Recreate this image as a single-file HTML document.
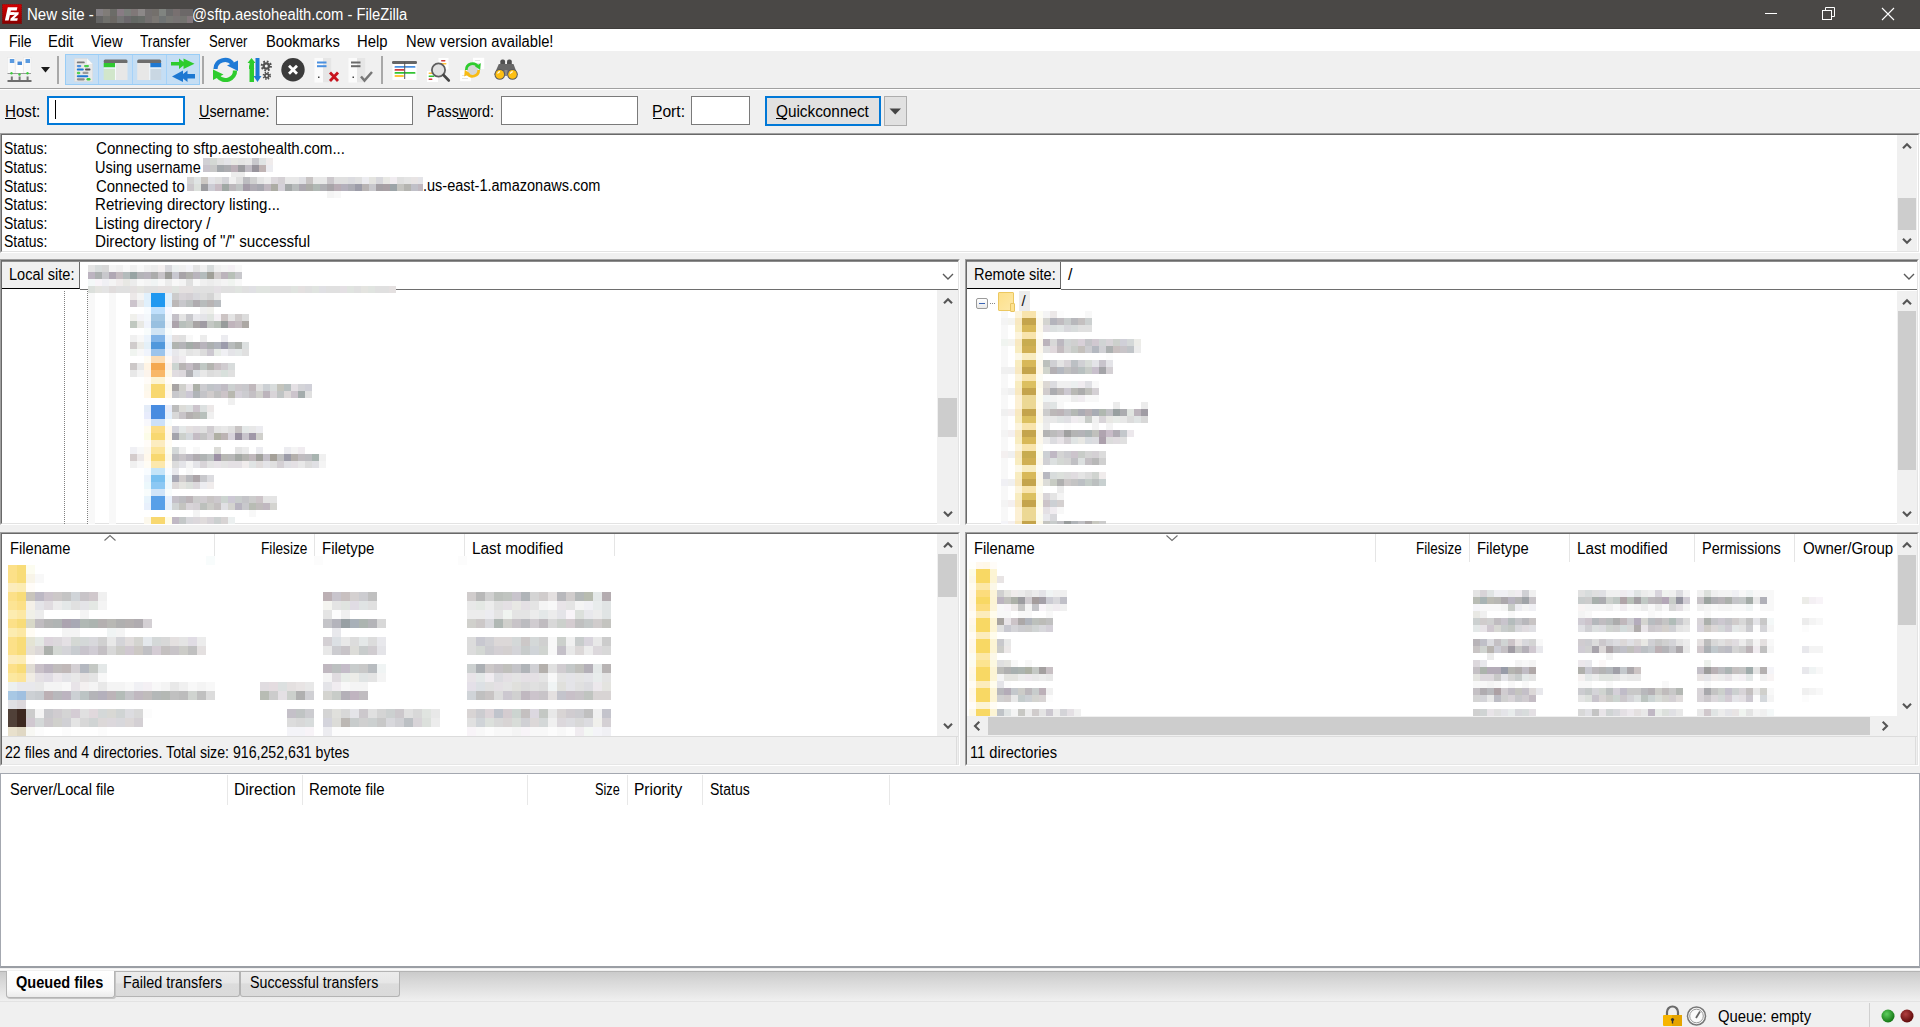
<!DOCTYPE html><html><head><meta charset="utf-8"><style>
*{margin:0;padding:0;box-sizing:border-box}
html,body{width:1920px;height:1027px;overflow:hidden;background:#f0f0f0;position:relative;font-family:"Liberation Sans",sans-serif;color:#000}
div{position:absolute}
.t{white-space:pre}
svg{position:absolute}
</style></head><body>
<div style="left:0px;top:0px;width:1920px;height:29px;background:#4a4846"></div>
<div style="left:0px;top:28px;width:1920px;height:1px;background:#3f3d3b"></div>
<svg style="left:2px;top:4px" width="20" height="20" viewBox="0 0 20 20">
<defs><linearGradient id="fzg" x1="0" y1="0" x2="0" y2="1"><stop offset="0" stop-color="#d40000"/><stop offset="1" stop-color="#8a0000"/></linearGradient></defs>
<rect x="0.3" y="0.3" width="19.4" height="19.4" fill="url(#fzg)" stroke="#7a0000" stroke-width="0.6" stroke-dasharray="1 1"/>
<path d="M5.8 3.3 H15.4 L14.7 6.4 H8.9 L8.5 8.2 H12.2 L11.6 11 H7.9 L6.6 16.4 H2.9 Z" fill="#fff"/>
<path d="M9 8.2 H16.8 L16.4 10.4 L12.2 14.3 H15.8 L15.2 16.8 H8.2 L8.6 14.6 L12.8 10.7 H8.5 Z" fill="#fff"/>
</svg>
<div class="t" style="left:26.66px;top:7.46px;font-size:16px;line-height:16px;transform:scaleX(0.9399);transform-origin:0 0;color:#fff">New site -</div>
<div style="left:96px;top:9px;width:96px;height:14px;background:linear-gradient(90deg,#6a6866,#77726f 20%,#5f5d5b 40%,#7a7775 60%,#656361 80%,#72706e)"></div>
<div class="t" style="left:191.88px;top:7.46px;font-size:16px;line-height:16px;transform:scaleX(0.9233);transform-origin:0 0;color:#fff">@sftp.aestohealth.com - FileZilla</div>
<div style="left:1765px;top:13px;width:12px;height:1px;background:#fff"></div>
<svg style="left:1822px;top:7px" width="14" height="14" viewBox="0 0 14 14"><rect x="0.5" y="3.5" width="9" height="9" fill="none" stroke="#fff"/><path d="M3.5 3.5 V0.5 H12.5 V9.5 H9.5" fill="none" stroke="#fff"/></svg>
<svg style="left:1881px;top:7px" width="14" height="14" viewBox="0 0 14 14"><path d="M1 1 L13 13 M13 1 L1 13" stroke="#fff" stroke-width="1.1"/></svg>
<div style="left:0px;top:29px;width:1920px;height:22px;background:#fff"></div>
<div class="t" style="left:8.52px;top:34.46px;font-size:16px;line-height:16px;transform:scaleX(0.8781);transform-origin:0 0;">File</div>
<div class="t" style="left:48.08px;top:34.46px;font-size:16px;line-height:16px;transform:scaleX(0.9217);transform-origin:0 0;">Edit</div>
<div class="t" style="left:91.10px;top:34.46px;font-size:16px;line-height:16px;transform:scaleX(0.9157);transform-origin:0 0;">View</div>
<div class="t" style="left:140.10px;top:34.46px;font-size:16px;line-height:16px;transform:scaleX(0.8550);transform-origin:0 0;">Transfer</div>
<div class="t" style="left:209.40px;top:34.46px;font-size:16px;line-height:16px;transform:scaleX(0.8160);transform-origin:0 0;">Server</div>
<div class="t" style="left:265.78px;top:34.46px;font-size:16px;line-height:16px;transform:scaleX(0.9225);transform-origin:0 0;">Bookmarks</div>
<div class="t" style="left:357.37px;top:34.46px;font-size:16px;line-height:16px;transform:scaleX(0.9279);transform-origin:0 0;">Help</div>
<div class="t" style="left:405.98px;top:34.46px;font-size:16px;line-height:16px;transform:scaleX(0.9211);transform-origin:0 0;">New version available!</div>
<div style="left:0px;top:51px;width:1920px;height:37px;background:#f0f0f0"></div>
<div style="left:0px;top:88px;width:1920px;height:1px;background:#a0a0a0"></div>
<div style="left:0px;top:89px;width:1920px;height:1px;background:#fff"></div>
<svg style="left:6px;top:56px" width="28" height="28" viewBox="0 0 28 28">
<rect x="1.5" y="1.5" width="7.5" height="16" fill="#fafafa" stroke="#e8e8e8" stroke-width="0.5"/>
<rect x="17.5" y="1.5" width="7.5" height="16" fill="#fafafa" stroke="#e8e8e8" stroke-width="0.5"/>
<rect x="9.8" y="4.2" width="7.4" height="14.5" fill="#fdfdfd" stroke="#e8e8e8" stroke-width="0.5"/>
<rect x="3.8" y="3" width="4.5" height="4" fill="#5b9be0"/>
<rect x="19.5" y="3" width="4.5" height="4" fill="#5b9be0"/>
<rect x="11.5" y="5.5" width="4.5" height="3.5" fill="#4a8cd8"/>
<rect x="1.5" y="17" width="23.5" height="1" fill="#9a9a9a"/>
<circle cx="5.5" cy="17.2" r="1.2" fill="#3ccc3c"/><circle cx="13.5" cy="18.5" r="1.2" fill="#3ccc3c"/><circle cx="21.5" cy="17.2" r="1.2" fill="#3ccc3c"/>
<rect x="4.8" y="20.5" width="2" height="4" fill="#777"/><rect x="12.6" y="20.5" width="2" height="4" fill="#777"/><rect x="20.6" y="20.5" width="2" height="4" fill="#777"/>
<rect x="1.5" y="24" width="24" height="2" fill="#6e6e6e"/>
</svg>
<svg style="left:40px;top:66px" width="11" height="8" viewBox="0 0 11 8"><path d="M1 1 H10 L5.5 6.5 Z" fill="#1a1a1a"/></svg>
<div style="left:57px;top:56px;width:2px;height:28px;background:#a8a8a8"></div>
<div style="left:65px;top:54px;width:135px;height:31px;background:#c5def4;border:1px solid #99cdf6"></div>
<div style="left:98px;top:55px;width:1px;height:29px;background:#a6d2f8"></div>
<div style="left:132px;top:55px;width:1px;height:29px;background:#a6d2f8"></div>
<div style="left:166px;top:55px;width:1px;height:29px;background:#a6d2f8"></div>
<svg style="left:73px;top:57px" width="21" height="26" viewBox="0 0 21 26">
<path d="M1.5 1.5 H14 L19.5 7 V24.5 H1.5 Z" fill="#e9e9e9" stroke="#dadada" stroke-width="0.6"/>
<path d="M14 1.5 L19.5 7 H14 Z" fill="#fafafa"/>
<rect x="3.8" y="4.5" width="8" height="1.8" rx="0.9" fill="#7a7a7a"/>
<rect x="3.8" y="8" width="4.5" height="2.2" rx="1.1" fill="#4c8fdc"/><rect x="11" y="8" width="5" height="2.2" rx="1.1" fill="#4ad04a"/>
<rect x="3.8" y="11.6" width="7" height="1.8" rx="0.9" fill="#1f7ad6"/><rect x="12" y="11.6" width="5.5" height="1.8" rx="0.9" fill="#555"/>
<rect x="3.8" y="14.8" width="3.5" height="2.4" rx="1.2" fill="#52d052"/><rect x="9.5" y="14.8" width="6" height="2.2" rx="1.1" fill="#9a9a9a"/>
<rect x="3.8" y="18.2" width="11.5" height="2" rx="1" fill="#1f7ad6"/>
<rect x="3.8" y="21.2" width="8" height="2.2" rx="1.1" fill="#8a8a8a"/><rect x="13.5" y="21" width="4" height="2.4" rx="1.2" fill="#3ccc3c"/>
</svg>
<svg style="left:103px;top:59px" width="25" height="22" viewBox="0 0 25 22">
<rect x="0.7" y="0.5" width="23.8" height="4" rx="1.5" fill="#6d6d6d"/>
<rect x="0.7" y="4" width="11.5" height="4.5" fill="#30c930"/>
<rect x="0.7" y="9.5" width="11.5" height="11.5" fill="#d1e6cb"/>
<rect x="13" y="4" width="11.5" height="17" fill="#e7e7e7"/>
<rect x="12.2" y="4" width="0.8" height="17" fill="#fff"/><rect x="0.7" y="8.5" width="11.5" height="1" fill="#fff"/>
</svg>
<svg style="left:137px;top:59px" width="25" height="22" viewBox="0 0 25 22">
<rect x="0.2" y="0.5" width="24" height="4" rx="1.5" fill="#6d6d6d"/>
<rect x="0.2" y="4" width="12.2" height="17" fill="#e7e7e7"/>
<rect x="13.2" y="4" width="11" height="4.5" fill="#1f78d1"/>
<rect x="13.2" y="9.5" width="11" height="11.5" fill="#c9d7e3"/>
<rect x="12.4" y="4" width="0.8" height="17" fill="#fff"/><rect x="13.2" y="8.5" width="11" height="1" fill="#fff"/>
</svg>
<svg style="left:170px;top:57px" width="27" height="26" viewBox="0 0 27 26">
<path d="M1 5 H9 V1.5 L13.5 5 V1.5 L24.5 6.8 L13.5 12 V8.5 L9 12 V8.5 H1 Z" fill="#2ecc2e"/>
<path d="M25 17 H17.5 V13.5 L13 17 V13.5 L2 19.5 L13 25 V21.5 L17.5 25 V21.5 H25 Z" fill="#1d78d2"/>
</svg>
<div style="left:202px;top:56px;width:2px;height:28px;background:#a8a8a8"></div>
<svg style="left:212px;top:57px" width="27" height="26" viewBox="0 0 27 26">
<path d="M3.5 12 A9.5 9 0 0 1 20.5 6.5" fill="none" stroke="#1e7ad6" stroke-width="4.2"/>
<path d="M15 8.5 L26 3.5 L26 14 Z" fill="#1e7ad6"/>
<path d="M23 13.5 A9.5 9 0 0 1 6 19.5" fill="none" stroke="#2ecc2e" stroke-width="4.2"/>
<path d="M11.5 17.5 L1 23 L1 12.5 Z" fill="#2ecc2e"/>
</svg>
<svg style="left:246px;top:57px" width="27" height="26" viewBox="0 0 27 26">
<path d="M5.5 1 L9.5 6 H8 V25 H3.5 V6 H1.5 Z" fill="#2ecc2e"/>
<path d="M3 8 L8.5 12 L3 12 Z" fill="#2ecc2e"/>
<rect x="9.5" y="1" width="4" height="19" fill="#1e7ad6"/>
<path d="M7.5 19 H15.5 L11.5 25 Z" fill="#1e7ad6"/>
<circle cx="20.3" cy="9" r="4.6" fill="none" stroke="#505050" stroke-width="2" stroke-dasharray="1.8 1.8"/>
<circle cx="20.3" cy="9" r="3.8" fill="#505050"/><circle cx="20.3" cy="9" r="1.5" fill="#f0f0f0"/>
<circle cx="20.8" cy="18.8" r="3.4" fill="none" stroke="#505050" stroke-width="1.6" stroke-dasharray="1.4 1.3"/>
<circle cx="20.8" cy="18.8" r="2.8" fill="#505050"/><circle cx="20.8" cy="18.8" r="1.1" fill="#f0f0f0"/>
</svg>
<svg style="left:280px;top:57px" width="27" height="26" viewBox="0 0 27 26">
<circle cx="13" cy="12.8" r="11.7" fill="#3b3b3b"/>
<path d="M9 8.8 L17 16.8 M17 8.8 L9 16.8" stroke="#fff" stroke-width="2.8"/>
</svg>
<svg style="left:313px;top:57px" width="28" height="26" viewBox="0 0 28 26">
<rect x="1.5" y="1" width="17" height="24.5" fill="#fbfbfb"/>
<rect x="10" y="1" width="8.5" height="24.5" fill="#e6e6e6"/>
<rect x="4" y="4.5" width="9.5" height="2" fill="#4a90e0"/>
<rect x="4" y="8.2" width="9.5" height="2" fill="#4a90e0"/>
<rect x="5" y="19.5" width="1.5" height="1.5" fill="#444"/>
<path d="M17 15.5 L25 24 M25 15.5 L17 24" stroke="#c8141e" stroke-width="2.8"/>
</svg>
<svg style="left:347px;top:57px" width="28" height="26" viewBox="0 0 28 26">
<rect x="1.5" y="1" width="17" height="24.5" fill="#fbfbfb"/>
<rect x="10" y="1" width="8.5" height="24.5" fill="#e6e6e6"/>
<rect x="4" y="4.5" width="9.5" height="2" fill="#6a6a6a"/>
<rect x="4" y="8.2" width="9.5" height="2" fill="#6a6a6a"/>
<rect x="5.5" y="19.5" width="1.5" height="1.5" fill="#444"/>
<path d="M14 19.5 L17.5 23.5 L25 15" fill="none" stroke="#777" stroke-width="2.5"/>
</svg>
<div style="left:381px;top:56px;width:2px;height:28px;background:#a8a8a8"></div>
<svg style="left:391px;top:60px" width="27" height="21" viewBox="0 0 27 21">
<rect x="1.5" y="2" width="24" height="18" fill="#fff"/>
<rect x="1" y="1" width="25" height="3" rx="1.3" fill="#666"/>
<rect x="3.5" y="6" width="21" height="1.8" rx="0.9" fill="#4a90e0"/>
<rect x="3.5" y="9" width="10" height="1.8" rx="0.9" fill="#d23c3c"/>
<rect x="3.5" y="12" width="21" height="1.8" rx="0.9" fill="#33c433"/>
<rect x="3.5" y="15" width="9.5" height="1.9" rx="0.9" fill="#ffc43a"/>
<rect x="13.2" y="2" width="1" height="17" fill="#555"/>
</svg>
<svg style="left:425px;top:57px" width="27" height="26" viewBox="0 0 27 26">
<rect x="13.5" y="1" width="10" height="11.5" fill="#fff"/>
<rect x="16" y="3" width="4.5" height="1.5" rx="0.7" fill="#d23c3c"/>
<rect x="14.5" y="6" width="7" height="1.5" rx="0.7" fill="#ffc43a"/>
<rect x="14.5" y="9" width="5" height="1.5" rx="0.7" fill="#33c433"/>
<rect x="2" y="14" width="11" height="11" fill="#fff"/>
<rect x="3.5" y="15.5" width="4" height="1.5" rx="0.7" fill="#ffc43a"/>
<rect x="3.5" y="18.5" width="6" height="1.5" rx="0.7" fill="#33c433"/>
<rect x="3.5" y="21.5" width="4" height="1.5" rx="0.7" fill="#d23c3c"/>
<circle cx="13.5" cy="13" r="6.6" fill="#e2e2e2" stroke="#5e5e5e" stroke-width="1.8"/>
<path d="M18.5 18 L23.8 23.5" stroke="#444" stroke-width="2.6" stroke-linecap="round"/>
</svg>
<svg style="left:459px;top:57px" width="27" height="26" viewBox="0 0 27 26">
<rect x="14" y="0.8" width="11.2" height="11.3" fill="#fff"/>
<rect x="16" y="3" width="5" height="0.8" fill="#ddd"/><rect x="16" y="6" width="6" height="0.8" fill="#ddd"/>
<rect x="1.1" y="13.2" width="10.9" height="11" fill="#fff"/>
<rect x="3" y="18" width="5" height="0.8" fill="#ddd"/><rect x="3" y="21" width="6" height="0.8" fill="#ddd"/>
<circle cx="13.5" cy="12.9" r="5.5" fill="#d6d6d6"/>
<path d="M7.3 12.9 A6.2 6.2 0 0 1 18.8 9.6" fill="none" stroke="#2ecc2e" stroke-width="2.7"/>
<path d="M16 9.2 L21.8 6.2 L21.2 13 Z" fill="#2ecc2e"/>
<path d="M19.7 12.9 A6.2 6.2 0 0 1 8.2 16.2" fill="none" stroke="#f7bb14" stroke-width="2.7"/>
<path d="M11 16.6 L5.2 19.6 L5.8 12.8 Z" fill="#f7bb14"/>
</svg>
<svg style="left:492px;top:58px" width="28" height="24" viewBox="0 0 28 24">
<rect x="8.3" y="1.6" width="4.8" height="6" rx="2" fill="#505050"/>
<rect x="15" y="1.6" width="4.8" height="6" rx="2" fill="#505050"/>
<path d="M6.8 6 H21.5 L25.5 16.5 H2.2 Z" fill="#676767"/>
<rect x="12.5" y="12" width="3" height="6" fill="#8a8a8a"/>
<circle cx="7.8" cy="16.4" r="5.3" fill="#5a5a5a"/><circle cx="20.5" cy="16.4" r="5.3" fill="#5a5a5a"/>
<circle cx="7.8" cy="16.4" r="4.3" fill="#fdbf12"/><circle cx="20.5" cy="16.4" r="4.3" fill="#fdbf12"/>
<path d="M5.6 15.6 Q6.2 14 8 13.6" fill="none" stroke="#fff" stroke-width="1.1"/><path d="M18.3 15.6 Q18.9 14 20.7 13.6" fill="none" stroke="#fff" stroke-width="1.1"/>
</svg>
<div class="t" style="left:5.15px;top:104.46px;font-size:16px;line-height:16px;transform:scaleX(0.9456);transform-origin:0 0;">Host:</div>
<div style="left:5px;top:118px;width:11px;height:1px;background:#000"></div>
<div style="left:47px;top:96px;width:138px;height:29px;background:#fff;border:2px solid #0078d7"></div>
<div style="left:55px;top:100px;width:1px;height:19px;background:#000"></div>
<div class="t" style="left:198.70px;top:104.46px;font-size:16px;line-height:16px;transform:scaleX(0.8997);transform-origin:0 0;">Username:</div>
<div style="left:199px;top:118px;width:11px;height:1px;background:#000"></div>
<div style="left:276px;top:96px;width:137px;height:29px;background:#fff;border:1px solid #7a7a7a"></div>
<div class="t" style="left:427.00px;top:104.46px;font-size:16px;line-height:16px;transform:scaleX(0.8969);transform-origin:0 0;">Password:</div>
<div style="left:457px;top:118px;width:11px;height:1px;background:#000"></div>
<div style="left:501px;top:96px;width:137px;height:29px;background:#fff;border:1px solid #7a7a7a"></div>
<div class="t" style="left:651.72px;top:104.46px;font-size:16px;line-height:16px;transform:scaleX(0.9763);transform-origin:0 0;">Port:</div>
<div style="left:652.5px;top:118px;width:9px;height:1px;background:#000"></div>
<div style="left:691px;top:96px;width:59px;height:29px;background:#fff;border:1px solid #7a7a7a"></div>
<div style="left:765px;top:96px;width:116px;height:30px;background:#e1e1e1;border:2px solid #0078d7"></div>
<div class="t" style="left:775.80px;top:104.46px;font-size:16px;line-height:16px;transform:scaleX(0.9580);transform-origin:0 0;">Quickconnect</div>
<div style="left:776px;top:118px;width:11px;height:1px;background:#000"></div>
<div style="left:884px;top:96px;width:23px;height:30px;background:#e1e1e1;border:1px solid #adadad"></div>
<svg style="left:889px;top:108px" width="13" height="8" viewBox="0 0 13 8"><path d="M0.5 0.5 H12 L6.25 6.5 Z" fill="#444"/></svg>
<div style="left:0px;top:133px;width:1920px;height:120px;background:#fff;border-top:1px solid #a0a0a0;border-left:1px solid #a0a0a0;border-right:1px solid #fff;border-bottom:1px solid #fff"></div>
<div style="left:1px;top:134px;width:1918px;height:118px;background:#fff;border-top:1px solid #696969;border-left:1px solid #696969;border-right:1px solid #e3e3e3;border-bottom:1px solid #e3e3e3"></div>
<div style="left:1897px;top:135px;width:20px;height:116px;background:#f0f0f0"></div>
<div style="left:1898px;top:198px;width:18px;height:32px;background:#cdcdcd"></div>
<svg style="left:1901.0px;top:142px" width="12" height="8" viewBox="0 0 12 8"><path d="M2 6.3 L6 2.3 L10 6.3" fill="none" stroke="#555" stroke-width="2.1"/></svg>
<svg style="left:1901.0px;top:237px" width="12" height="8" viewBox="0 0 12 8"><path d="M2 1.7 L6 5.7 L10 1.7" fill="none" stroke="#555" stroke-width="2.1"/></svg>
<div class="t" style="left:4.30px;top:141.46px;font-size:16px;line-height:16px;transform:scaleX(0.8706);transform-origin:0 0;">Status:</div>
<div class="t" style="left:95.60px;top:141.46px;font-size:16px;line-height:16px;transform:scaleX(0.9425);transform-origin:0 0;">Connecting to sftp.aestohealth.com...</div>
<div class="t" style="left:4.30px;top:160.46px;font-size:16px;line-height:16px;transform:scaleX(0.8706);transform-origin:0 0;">Status:</div>
<div class="t" style="left:94.69px;top:160.46px;font-size:16px;line-height:16px;transform:scaleX(0.9074);transform-origin:0 0;">Using username</div>
<div class="t" style="left:4.30px;top:179.46px;font-size:16px;line-height:16px;transform:scaleX(0.8706);transform-origin:0 0;">Status:</div>
<div class="t" style="left:95.60px;top:179.46px;font-size:16px;line-height:16px;transform:scaleX(0.9330);transform-origin:0 0;">Connected to</div>
<div class="t" style="left:4.30px;top:197.46px;font-size:16px;line-height:16px;transform:scaleX(0.8706);transform-origin:0 0;">Status:</div>
<div class="t" style="left:94.66px;top:197.46px;font-size:16px;line-height:16px;transform:scaleX(0.9414);transform-origin:0 0;">Retrieving directory listing...</div>
<div class="t" style="left:4.30px;top:216.46px;font-size:16px;line-height:16px;transform:scaleX(0.8706);transform-origin:0 0;">Status:</div>
<div class="t" style="left:94.64px;top:216.46px;font-size:16px;line-height:16px;transform:scaleX(0.9552);transform-origin:0 0;">Listing directory /</div>
<div class="t" style="left:4.30px;top:234.46px;font-size:16px;line-height:16px;transform:scaleX(0.8706);transform-origin:0 0;">Status:</div>
<div class="t" style="left:94.65px;top:234.46px;font-size:16px;line-height:16px;transform:scaleX(0.9498);transform-origin:0 0;">Directory listing of "/" successful</div>
<div style="left:0px;top:259px;width:960px;height:266px;background:#fff;border-top:1px solid #a0a0a0;border-left:1px solid #a0a0a0;border-right:1px solid #fff;border-bottom:1px solid #fff"></div>
<div style="left:1px;top:260px;width:958px;height:264px;background:#fff;border-top:1px solid #696969;border-left:1px solid #696969;border-right:1px solid #e3e3e3;border-bottom:1px solid #e3e3e3"></div>
<div style="left:2px;top:261px;width:78px;height:28px;background:#f0f0f0;border-right:1px solid #696969;border-bottom:1px solid #000"></div>
<div style="left:2px;top:261px;width:956px;height:1px;background:#8c8c8c"></div>
<div style="left:80px;top:289px;width:878px;height:1px;background:#6e6e6e"></div>
<div class="t" style="left:8.79px;top:267.46px;font-size:16px;line-height:16px;transform:scaleX(0.9081);transform-origin:0 0;">Local site:</div>
<svg style="left:942.0px;top:272.7px" width="12" height="7" viewBox="0 0 12 7"><path d="M1 1 L6.0 6 L11 1" fill="none" stroke="#5a5a5a" stroke-width="1.4"/></svg>
<div style="left:937px;top:290px;width:21px;height:234px;background:#f0f0f0"></div>
<div style="left:938px;top:398px;width:19px;height:39px;background:#cdcdcd"></div>
<svg style="left:941.5px;top:297px" width="12" height="8" viewBox="0 0 12 8"><path d="M2 6.3 L6 2.3 L10 6.3" fill="none" stroke="#555" stroke-width="2.1"/></svg>
<svg style="left:941.5px;top:510px" width="12" height="8" viewBox="0 0 12 8"><path d="M2 1.7 L6 5.7 L10 1.7" fill="none" stroke="#555" stroke-width="2.1"/></svg>
<div style="left:0px;top:532px;width:960px;height:234px;background:#fff;border-top:1px solid #a0a0a0;border-left:1px solid #a0a0a0;border-right:1px solid #fff;border-bottom:1px solid #fff"></div>
<div style="left:1px;top:533px;width:958px;height:232px;background:#fff;border-top:1px solid #696969;border-left:1px solid #696969;border-right:1px solid #e3e3e3;border-bottom:1px solid #e3e3e3"></div>
<div style="left:2px;top:736px;width:956px;height:29px;background:#f0f0f0;border-top:1px solid #dcdcdc;border-bottom:1px solid #e6e6e6"></div>
<div style="left:956px;top:737px;width:1px;height:28px;background:#dcdcdc"></div>
<div class="t" style="left:5.30px;top:745.46px;font-size:16px;line-height:16px;transform:scaleX(0.8848);transform-origin:0 0;">22 files and 4 directories. Total size: 916,252,631 bytes</div>
<div style="left:965px;top:259px;width:954px;height:266px;background:#fff;border-top:1px solid #a0a0a0;border-left:1px solid #a0a0a0;border-right:1px solid #fff;border-bottom:1px solid #fff"></div>
<div style="left:966px;top:260px;width:952px;height:264px;background:#fff;border-top:1px solid #696969;border-left:1px solid #696969;border-right:1px solid #e3e3e3;border-bottom:1px solid #e3e3e3"></div>
<div style="left:967px;top:261px;width:94px;height:28px;background:#f0f0f0;border-right:1px solid #696969;border-bottom:1px solid #000"></div>
<div style="left:967px;top:261px;width:950px;height:1px;background:#8c8c8c"></div>
<div style="left:1061px;top:289px;width:856px;height:1px;background:#6e6e6e"></div>
<div class="t" style="left:973.79px;top:267.46px;font-size:16px;line-height:16px;transform:scaleX(0.9100);transform-origin:0 0;">Remote site:</div>
<svg style="left:1902.5px;top:272.7px" width="12" height="7" viewBox="0 0 12 7"><path d="M1 1 L6.0 6 L11 1" fill="none" stroke="#5a5a5a" stroke-width="1.4"/></svg>
<div style="left:1897px;top:291px;width:20px;height:233px;background:#f0f0f0"></div>
<div style="left:1898px;top:311px;width:18px;height:159px;background:#cdcdcd"></div>
<svg style="left:1901.0px;top:298px" width="12" height="8" viewBox="0 0 12 8"><path d="M2 6.3 L6 2.3 L10 6.3" fill="none" stroke="#555" stroke-width="2.1"/></svg>
<svg style="left:1901.0px;top:510px" width="12" height="8" viewBox="0 0 12 8"><path d="M2 1.7 L6 5.7 L10 1.7" fill="none" stroke="#555" stroke-width="2.1"/></svg>
<div style="left:965px;top:532px;width:954px;height:234px;background:#fff;border-top:1px solid #a0a0a0;border-left:1px solid #a0a0a0;border-right:1px solid #fff;border-bottom:1px solid #fff"></div>
<div style="left:966px;top:533px;width:952px;height:232px;background:#fff;border-top:1px solid #696969;border-left:1px solid #696969;border-right:1px solid #e3e3e3;border-bottom:1px solid #e3e3e3"></div>
<div style="left:967px;top:736px;width:950px;height:29px;background:#f0f0f0;border-top:1px solid #dcdcdc;border-bottom:1px solid #e6e6e6"></div>
<div style="left:1915px;top:737px;width:1px;height:28px;background:#dcdcdc"></div>
<div class="t" style="left:969.58px;top:745.46px;font-size:16px;line-height:16px;transform:scaleX(0.9184);transform-origin:0 0;">11 directories</div>
<div class="t" style="left:1068px;top:267.46px;font-size:16px;line-height:16px;">/</div>
<div class="t" style="left:9.58px;top:541.46px;font-size:16px;line-height:16px;transform:scaleX(0.9167);transform-origin:0 0;">Filename</div>
<svg style="left:103px;top:534px" width="14" height="8" viewBox="0 0 14 8"><path d="M1.5 6.5 L7 1.5 L12.5 6.5" fill="none" stroke="#707070" stroke-width="1.1"/></svg>
<div style="left:214px;top:534px;width:1px;height:22px;background:#e5e5e5"></div>
<div style="left:314px;top:534px;width:1px;height:22px;background:#e5e5e5"></div>
<div style="left:464px;top:534px;width:1px;height:22px;background:#e5e5e5"></div>
<div style="left:614px;top:534px;width:1px;height:22px;background:#e5e5e5"></div>
<div class="t" style="left:261.05px;top:541.46px;font-size:16px;line-height:16px;transform:scaleX(0.8550);transform-origin:0 0;">Filesize</div>
<div class="t" style="left:321.57px;top:541.46px;font-size:16px;line-height:16px;transform:scaleX(0.9342);transform-origin:0 0;">Filetype</div>
<div class="t" style="left:471.94px;top:541.46px;font-size:16px;line-height:16px;transform:scaleX(0.9586);transform-origin:0 0;">Last modified</div>
<div style="left:937px;top:534px;width:21px;height:202px;background:#f0f0f0"></div>
<div style="left:938px;top:554px;width:19px;height:43px;background:#cdcdcd"></div>
<svg style="left:941.5px;top:541px" width="12" height="8" viewBox="0 0 12 8"><path d="M2 6.3 L6 2.3 L10 6.3" fill="none" stroke="#555" stroke-width="2.1"/></svg>
<svg style="left:941.5px;top:722px" width="12" height="8" viewBox="0 0 12 8"><path d="M2 1.7 L6 5.7 L10 1.7" fill="none" stroke="#555" stroke-width="2.1"/></svg>
<div style="left:976px;top:298px;width:12px;height:11px;background:linear-gradient(#fff,#e8e8e8);border:1px solid #9a9a9a;border-radius:2px"></div>
<div style="left:979px;top:303px;width:6px;height:1px;background:#3a64b4"></div>
<div style="left:990px;top:303px;width:1px;height:1px;background:#888"></div>
<div style="left:992px;top:303px;width:1px;height:1px;background:#888"></div>
<div style="left:994px;top:303px;width:1px;height:1px;background:#888"></div>
<div style="left:998px;top:292px;width:16px;height:19px;background:linear-gradient(135deg,#fde08a,#fde8a8);border:1px solid #ecc860;border-radius:1px"></div>
<div style="left:1010px;top:303px;width:5px;height:9px;background:#fde290;border:1px solid #e8c460;border-radius:1px"></div>
<div style="left:1019px;top:291px;width:11px;height:20px;background:#ececec"></div>
<div class="t" style="left:1021.5px;top:293.30px;font-size:15px;line-height:15px;color:#101010">/</div>
<div class="t" style="left:974.28px;top:541.46px;font-size:16px;line-height:16px;transform:scaleX(0.9213);transform-origin:0 0;">Filename</div>
<svg style="left:1165px;top:534px" width="14" height="8" viewBox="0 0 14 8"><path d="M1.5 1.5 L7 6.5 L12.5 1.5" fill="none" stroke="#707070" stroke-width="1.1"/></svg>
<div style="left:1375px;top:534px;width:1px;height:28px;background:#e5e5e5"></div>
<div style="left:1469px;top:534px;width:1px;height:28px;background:#e5e5e5"></div>
<div style="left:1569px;top:534px;width:1px;height:28px;background:#e5e5e5"></div>
<div style="left:1694px;top:534px;width:1px;height:28px;background:#e5e5e5"></div>
<div style="left:1794px;top:534px;width:1px;height:28px;background:#e5e5e5"></div>
<div class="t" style="left:1416.26px;top:541.46px;font-size:16px;line-height:16px;transform:scaleX(0.8418);transform-origin:0 0;">Filesize</div>
<div class="t" style="left:1476.78px;top:541.46px;font-size:16px;line-height:16px;transform:scaleX(0.9215);transform-origin:0 0;">Filetype</div>
<div class="t" style="left:1577.25px;top:541.46px;font-size:16px;line-height:16px;transform:scaleX(0.9521);transform-origin:0 0;">Last modified</div>
<div class="t" style="left:1701.90px;top:541.46px;font-size:16px;line-height:16px;transform:scaleX(0.9044);transform-origin:0 0;">Permissions</div>
<div class="t" style="left:1802.80px;top:541.46px;font-size:16px;line-height:16px;transform:scaleX(0.9382);transform-origin:0 0;">Owner/Group</div>
<div style="left:1897px;top:534px;width:20px;height:182px;background:#f0f0f0"></div>
<div style="left:1898px;top:555px;width:18px;height:70px;background:#cdcdcd"></div>
<svg style="left:1901.0px;top:541px" width="12" height="8" viewBox="0 0 12 8"><path d="M2 6.3 L6 2.3 L10 6.3" fill="none" stroke="#555" stroke-width="2.1"/></svg>
<svg style="left:1901.0px;top:702px" width="12" height="8" viewBox="0 0 12 8"><path d="M2 1.7 L6 5.7 L10 1.7" fill="none" stroke="#555" stroke-width="2.1"/></svg>
<div style="left:967px;top:716px;width:930px;height:20px;background:#f0f0f0"></div>
<div style="left:988px;top:717px;width:882px;height:18px;background:#cdcdcd"></div>
<svg style="left:972px;top:720px" width="10" height="12" viewBox="0 0 10 12"><path d="M7.3 1.8 L3 6 L7.3 10.2" fill="none" stroke="#555" stroke-width="2.1"/></svg>
<svg style="left:1880px;top:720px" width="10" height="12" viewBox="0 0 10 12"><path d="M2.7 1.8 L7 6 L2.7 10.2" fill="none" stroke="#555" stroke-width="2.1"/></svg>
<div style="left:1897px;top:716px;width:20px;height:20px;background:#f0f0f0"></div>
<div style="left:0px;top:773px;width:1920px;height:195px;background:#fff;border:1px solid #a4a8b0;border-bottom:2px solid #9a9ea4"></div>
<div class="t" style="left:10.20px;top:782.46px;font-size:16px;line-height:16px;transform:scaleX(0.9127);transform-origin:0 0;">Server/Local file</div>
<div class="t" style="left:234.22px;top:782.46px;font-size:16px;line-height:16px;transform:scaleX(0.9766);transform-origin:0 0;">Direction</div>
<div class="t" style="left:309.27px;top:782.46px;font-size:16px;line-height:16px;transform:scaleX(0.9347);transform-origin:0 0;">Remote file</div>
<div class="t" style="left:634.23px;top:782.46px;font-size:16px;line-height:16px;transform:scaleX(0.9696);transform-origin:0 0;">Priority</div>
<div class="t" style="left:710.20px;top:782.46px;font-size:16px;line-height:16px;transform:scaleX(0.8774);transform-origin:0 0;">Status</div>
<div class="t" style="left:595.20px;top:782.46px;font-size:16px;line-height:16px;transform:scaleX(0.7942);transform-origin:0 0;">Size</div>
<div style="left:227px;top:775px;width:1px;height:30px;background:#e8e8e8"></div>
<div style="left:302px;top:775px;width:1px;height:30px;background:#e8e8e8"></div>
<div style="left:527px;top:775px;width:1px;height:30px;background:#e8e8e8"></div>
<div style="left:627px;top:775px;width:1px;height:30px;background:#e8e8e8"></div>
<div style="left:702px;top:775px;width:1px;height:30px;background:#e8e8e8"></div>
<div style="left:889px;top:775px;width:1px;height:30px;background:#e8e8e8"></div>
<div style="left:0px;top:969px;width:1920px;height:1px;background:#fcfcfc"></div>
<div style="left:0px;top:971px;width:1920px;height:30px;background:linear-gradient(#c9c9c9,#d6d6d6 30%,#ececec 90%,#f0f0f0)"></div>
<div style="left:0px;top:971px;width:1920px;height:1px;background:#b4b4b4"></div>
<div style="left:0px;top:1001px;width:1920px;height:1px;background:#e3e3e3"></div>
<div style="left:114px;top:972px;width:126px;height:25px;background:linear-gradient(#ececec,#e6e6e6 45%,#dcdcdc 50%,#dadada);border:1px solid #b4b4b4;border-top:none;border-radius:0 0 3px 3px"></div>
<div style="left:240px;top:972px;width:160px;height:25px;background:linear-gradient(#ececec,#e6e6e6 45%,#dcdcdc 50%,#dadada);border:1px solid #b4b4b4;border-top:none;border-radius:0 0 3px 3px"></div>
<div style="left:6px;top:971px;width:109px;height:27px;background:linear-gradient(#fff,#fafafa 70%,#ebebeb);border:1px solid #b4b4b4;border-top:none;border-radius:0 0 3px 3px;box-shadow:1px 1px 0 #c4c4c4"></div>
<div class="t" style="left:16.20px;top:975.46px;font-size:16px;line-height:16px;transform:scaleX(0.9082);transform-origin:0 0;font-weight:bold">Queued files</div>
<div class="t" style="left:123.30px;top:975.46px;font-size:16px;line-height:16px;transform:scaleX(0.8996);transform-origin:0 0;">Failed transfers</div>
<div class="t" style="left:250.20px;top:975.46px;font-size:16px;line-height:16px;transform:scaleX(0.8906);transform-origin:0 0;">Successful transfers</div>
<div style="left:0px;top:1002px;width:1920px;height:25px;background:#f0f0f0"></div>
<div style="left:1869px;top:1003px;width:1px;height:24px;background:#d0d0d0"></div>
<svg style="left:1662px;top:1005px" width="21" height="22" viewBox="0 0 21 22">
<path d="M5 10 V7 A5.5 5.5 0 0 1 16 7 V10" fill="none" stroke="#6a6a6a" stroke-width="2.2"/>
<rect x="1" y="10" width="19" height="11" rx="1" fill="#f7b500"/>
<rect x="10" y="10" width="10" height="11" fill="#e5a400"/>
<circle cx="10.5" cy="14.5" r="1.6" fill="#333"/><rect x="9.8" y="14.5" width="1.4" height="4" fill="#333"/>
</svg>
<svg style="left:1686px;top:1005px" width="21" height="22" viewBox="0 0 21 22">
<circle cx="10.5" cy="11" r="9" fill="#fafafa" stroke="#777" stroke-width="1.5"/>
<circle cx="10.5" cy="11" r="6.8" fill="none" stroke="#999" stroke-width="1"/>
<path d="M10 13 L14 6.5" stroke="#666" stroke-width="1.8"/>
</svg>
<div class="t" style="left:1717.70px;top:1009.46px;font-size:16px;line-height:16px;transform:scaleX(0.9264);transform-origin:0 0;">Queue: empty</div>
<svg style="left:1880px;top:1008px" width="36" height="16" viewBox="0 0 36 16">
<defs><radialGradient id="gg" cx="0.4" cy="0.35" r="0.7"><stop offset="0" stop-color="#5fcf5f"/><stop offset="1" stop-color="#0d6e0d"/></radialGradient>
<radialGradient id="rg" cx="0.4" cy="0.35" r="0.7"><stop offset="0" stop-color="#b04040"/><stop offset="1" stop-color="#5a0606"/></radialGradient></defs>
<circle cx="8" cy="8" r="6.5" fill="url(#gg)"/><circle cx="27" cy="8" r="6.5" fill="url(#rg)"/></svg>
<svg style="left:96px;top:9px" width="97" height="14" viewBox="0 0 97 14" shape-rendering="crispEdges"><path fill="#848084" d="M0 0h7v7h-7z"/><path fill="#807c78" d="M7 0h7v7h-7z"/><path fill="#6c6c68" d="M14 0h7v7h-7z"/><path fill="#887c84" d="M21 0h7v7h-7z"/><path fill="#7c807c" d="M28 0h7v7h-7z"/><path fill="#807878" d="M35 0h7v7h-7z"/><path fill="#8c8888" d="M42 0h7v7h-7z"/><path fill="#747070" d="M49 0h7v7h-7zM49 7h7v7h-7z"/><path fill="#74706c" d="M56 0h7v7h-7z"/><path fill="#808480" d="M63 0h7v7h-7z"/><path fill="#6c6c6c" d="M70 0h7v7h-7z"/><path fill="#787070" d="M77 0h7v7h-7z"/><path fill="#6c6868" d="M84 0h14v7h-14z"/><path fill="#646464" d="M0 7h7v7h-7z"/><path fill="#70706c" d="M7 7h7v7h-7z"/><path fill="#6c6864" d="M14 7h7v7h-7z"/><path fill="#747474" d="M21 7h7v7h-7z"/><path fill="#6c686c" d="M28 7h7v7h-7z"/><path fill="#646864" d="M35 7h7v7h-7z"/><path fill="#686c68" d="M42 7h7v7h-7z"/><path fill="#7c7874" d="M56 7h7v7h-7z"/><path fill="#707474" d="M63 7h7v7h-7z"/><path fill="#787874" d="M70 7h7v7h-7z"/><path fill="#787474" d="M77 7h7v7h-7z"/><path fill="#747470" d="M84 7h7v7h-7z"/><path fill="#84787c" d="M91 7h7v7h-7z"/></svg>
<svg style="left:203px;top:158px" width="70" height="21" viewBox="0 0 70 21" shape-rendering="crispEdges"><path fill="#d0d0d4" d="M0 0h7v7h-7z"/><path fill="#d4d8d4" d="M7 0h7v7h-7z"/><path fill="#e0e0e0" d="M14 0h7v7h-7z"/><path fill="#e4e4e8" d="M21 0h7v7h-7z"/><path fill="#e8e8e4" d="M28 0h7v7h-7z"/><path fill="#e4e4e4" d="M35 0h7v7h-7z"/><path fill="#e8e8e8" d="M42 0h7v7h-7z"/><path fill="#c8c8cc" d="M49 0h7v7h-7z"/><path fill="#e0e4e4" d="M56 0h7v7h-7z"/><path fill="#f0ecec" d="M63 0h7v7h-7z"/><path fill="#c8c4cc" d="M0 7h7v7h-7z"/><path fill="#c8c8c8" d="M7 7h7v7h-7z"/><path fill="#a4a8ac" d="M14 7h7v7h-7z"/><path fill="#acacb0" d="M21 7h7v7h-7z"/><path fill="#bcb0b8" d="M28 7h7v7h-7z"/><path fill="#9c9ca0" d="M35 7h7v7h-7z"/><path fill="#c0bcc4" d="M42 7h7v7h-7z"/><path fill="#98949c" d="M49 7h7v7h-7z"/><path fill="#c0b4b4" d="M56 7h7v7h-7z"/><path fill="#ececf0" d="M63 7h7v7h-7z"/><path fill="#ececec" d="M28 14h14v7h-14z"/></svg>
<svg style="left:187px;top:177px" width="236" height="21" viewBox="0 0 236 21" shape-rendering="crispEdges"><path fill="#d4d4d4" d="M0 0h7v7h-7z"/><path fill="#e0e4e4" d="M7 0h7v7h-7z"/><path fill="#ccc8c4" d="M14 0h7v7h-7z"/><path fill="#e4e4e8" d="M21 0h7v7h-7zM231 0h7v7h-7z"/><path fill="#e0e0e0" d="M28 0h7v7h-7zM49 0h7v7h-7zM147 0h14v7h-14zM168 0h7v7h-7zM210 0h7v7h-7z"/><path fill="#d4d4d8" d="M35 0h7v7h-7z"/><path fill="#f0f0f0" d="M42 0h7v7h-7z"/><path fill="#bcbcc0" d="M56 0h7v7h-7z"/><path fill="#d0d0d0" d="M63 0h7v7h-7z"/><path fill="#e4e4e4" d="M70 0h7v7h-7zM217 0h7v7h-7z"/><path fill="#ececec" d="M77 0h7v7h-7z"/><path fill="#dcd8dc" d="M84 0h7v7h-7z"/><path fill="#d4d0d4" d="M91 0h7v7h-7z"/><path fill="#e8e8e8" d="M98 0h14v7h-14zM126 0h14v7h-14z"/><path fill="#e0e0e4" d="M112 0h7v7h-7z"/><path fill="#c8c4c4" d="M119 0h7v7h-7z"/><path fill="#ccc8cc" d="M140 0h7v7h-7zM0 7h7v7h-7z"/><path fill="#dcdce0" d="M161 0h7v7h-7z"/><path fill="#ececf0" d="M175 0h7v7h-7z"/><path fill="#e4e4e0" d="M182 0h7v7h-7z"/><path fill="#d8d8dc" d="M189 0h7v7h-7z"/><path fill="#e8e8e4" d="M196 0h7v7h-7z"/><path fill="#f0ecf0" d="M203 0h7v7h-7z"/><path fill="#e8e4e4" d="M224 0h7v7h-7z"/><path fill="#dce0dc" d="M7 7h7v7h-7z"/><path fill="#9c9ca0" d="M14 7h7v7h-7z"/><path fill="#ccccd4" d="M21 7h7v7h-7z"/><path fill="#c8bcc4" d="M28 7h7v7h-7z"/><path fill="#a0a8a4" d="M35 7h7v7h-7z"/><path fill="#bcb8bc" d="M42 7h7v7h-7z"/><path fill="#c0c4c4" d="M49 7h7v7h-7z"/><path fill="#a49ca8" d="M56 7h7v7h-7z"/><path fill="#b0acb4" d="M63 7h7v7h-7z"/><path fill="#a8a8b0" d="M70 7h7v7h-7z"/><path fill="#c0b8c0" d="M77 7h7v7h-7zM231 7h7v7h-7z"/><path fill="#acaca4" d="M84 7h7v7h-7z"/><path fill="#d4d0d8" d="M91 7h7v7h-7z"/><path fill="#a4a8a8" d="M98 7h7v7h-7z"/><path fill="#b8bcbc" d="M105 7h7v7h-7z"/><path fill="#aca8b0" d="M112 7h7v7h-7z"/><path fill="#acaca8" d="M119 7h7v7h-7z"/><path fill="#b0b8b4" d="M126 7h7v7h-7z"/><path fill="#b0b0b4" d="M133 7h7v7h-7z"/><path fill="#a8a4a8" d="M140 7h7v7h-7z"/><path fill="#b8acb4" d="M147 7h7v7h-7z"/><path fill="#b4b0bc" d="M154 7h7v7h-7z"/><path fill="#acacb4" d="M161 7h7v7h-7z"/><path fill="#9c9ca8" d="M168 7h7v7h-7z"/><path fill="#b8b4b4" d="M175 7h7v7h-7z"/><path fill="#c8c8cc" d="M182 7h7v7h-7z"/><path fill="#a4a0a4" d="M189 7h7v7h-7z"/><path fill="#a8a0a4" d="M196 7h7v7h-7z"/><path fill="#9ca4a8" d="M203 7h7v7h-7z"/><path fill="#c4c4c0" d="M210 7h7v7h-7z"/><path fill="#b4b4b0" d="M217 7h7v7h-7z"/><path fill="#c0c0c8" d="M224 7h7v7h-7z"/><path fill="#f4f4f4" d="M140 14h7v7h-7z"/><path fill="#f8f8f8" d="M147 14h7v7h-7z"/></svg>
<div class="t" style="left:422.89px;top:178.46px;font-size:16px;line-height:16px;transform:scaleX(0.9068);transform-origin:0 0;">.us-east-1.amazonaws.com</div>
<div style="left:64px;top:291px;width:1px;height:1px;background:#808080"></div>
<div style="left:87px;top:291px;width:1px;height:1px;background:#808080"></div>
<div style="left:64px;top:293px;width:1px;height:1px;background:#808080"></div>
<div style="left:87px;top:293px;width:1px;height:1px;background:#808080"></div>
<div style="left:64px;top:295px;width:1px;height:1px;background:#808080"></div>
<div style="left:87px;top:295px;width:1px;height:1px;background:#808080"></div>
<div style="left:64px;top:297px;width:1px;height:1px;background:#808080"></div>
<div style="left:87px;top:297px;width:1px;height:1px;background:#808080"></div>
<div style="left:64px;top:299px;width:1px;height:1px;background:#808080"></div>
<div style="left:87px;top:299px;width:1px;height:1px;background:#808080"></div>
<div style="left:64px;top:301px;width:1px;height:1px;background:#808080"></div>
<div style="left:87px;top:301px;width:1px;height:1px;background:#808080"></div>
<div style="left:64px;top:303px;width:1px;height:1px;background:#808080"></div>
<div style="left:87px;top:303px;width:1px;height:1px;background:#808080"></div>
<div style="left:64px;top:305px;width:1px;height:1px;background:#808080"></div>
<div style="left:87px;top:305px;width:1px;height:1px;background:#808080"></div>
<div style="left:64px;top:307px;width:1px;height:1px;background:#808080"></div>
<div style="left:87px;top:307px;width:1px;height:1px;background:#808080"></div>
<div style="left:64px;top:309px;width:1px;height:1px;background:#808080"></div>
<div style="left:87px;top:309px;width:1px;height:1px;background:#808080"></div>
<div style="left:64px;top:311px;width:1px;height:1px;background:#808080"></div>
<div style="left:87px;top:311px;width:1px;height:1px;background:#808080"></div>
<div style="left:64px;top:313px;width:1px;height:1px;background:#808080"></div>
<div style="left:87px;top:313px;width:1px;height:1px;background:#808080"></div>
<div style="left:64px;top:315px;width:1px;height:1px;background:#808080"></div>
<div style="left:87px;top:315px;width:1px;height:1px;background:#808080"></div>
<div style="left:64px;top:317px;width:1px;height:1px;background:#808080"></div>
<div style="left:87px;top:317px;width:1px;height:1px;background:#808080"></div>
<div style="left:64px;top:319px;width:1px;height:1px;background:#808080"></div>
<div style="left:87px;top:319px;width:1px;height:1px;background:#808080"></div>
<div style="left:64px;top:321px;width:1px;height:1px;background:#808080"></div>
<div style="left:87px;top:321px;width:1px;height:1px;background:#808080"></div>
<div style="left:64px;top:323px;width:1px;height:1px;background:#808080"></div>
<div style="left:87px;top:323px;width:1px;height:1px;background:#808080"></div>
<div style="left:64px;top:325px;width:1px;height:1px;background:#808080"></div>
<div style="left:87px;top:325px;width:1px;height:1px;background:#808080"></div>
<div style="left:64px;top:327px;width:1px;height:1px;background:#808080"></div>
<div style="left:87px;top:327px;width:1px;height:1px;background:#808080"></div>
<div style="left:64px;top:329px;width:1px;height:1px;background:#808080"></div>
<div style="left:87px;top:329px;width:1px;height:1px;background:#808080"></div>
<div style="left:64px;top:331px;width:1px;height:1px;background:#808080"></div>
<div style="left:87px;top:331px;width:1px;height:1px;background:#808080"></div>
<div style="left:64px;top:333px;width:1px;height:1px;background:#808080"></div>
<div style="left:87px;top:333px;width:1px;height:1px;background:#808080"></div>
<div style="left:64px;top:335px;width:1px;height:1px;background:#808080"></div>
<div style="left:87px;top:335px;width:1px;height:1px;background:#808080"></div>
<div style="left:64px;top:337px;width:1px;height:1px;background:#808080"></div>
<div style="left:87px;top:337px;width:1px;height:1px;background:#808080"></div>
<div style="left:64px;top:339px;width:1px;height:1px;background:#808080"></div>
<div style="left:87px;top:339px;width:1px;height:1px;background:#808080"></div>
<div style="left:64px;top:341px;width:1px;height:1px;background:#808080"></div>
<div style="left:87px;top:341px;width:1px;height:1px;background:#808080"></div>
<div style="left:64px;top:343px;width:1px;height:1px;background:#808080"></div>
<div style="left:87px;top:343px;width:1px;height:1px;background:#808080"></div>
<div style="left:64px;top:345px;width:1px;height:1px;background:#808080"></div>
<div style="left:87px;top:345px;width:1px;height:1px;background:#808080"></div>
<div style="left:64px;top:347px;width:1px;height:1px;background:#808080"></div>
<div style="left:87px;top:347px;width:1px;height:1px;background:#808080"></div>
<div style="left:64px;top:349px;width:1px;height:1px;background:#808080"></div>
<div style="left:87px;top:349px;width:1px;height:1px;background:#808080"></div>
<div style="left:64px;top:351px;width:1px;height:1px;background:#808080"></div>
<div style="left:87px;top:351px;width:1px;height:1px;background:#808080"></div>
<div style="left:64px;top:353px;width:1px;height:1px;background:#808080"></div>
<div style="left:87px;top:353px;width:1px;height:1px;background:#808080"></div>
<div style="left:64px;top:355px;width:1px;height:1px;background:#808080"></div>
<div style="left:87px;top:355px;width:1px;height:1px;background:#808080"></div>
<div style="left:64px;top:357px;width:1px;height:1px;background:#808080"></div>
<div style="left:87px;top:357px;width:1px;height:1px;background:#808080"></div>
<div style="left:64px;top:359px;width:1px;height:1px;background:#808080"></div>
<div style="left:87px;top:359px;width:1px;height:1px;background:#808080"></div>
<div style="left:64px;top:361px;width:1px;height:1px;background:#808080"></div>
<div style="left:87px;top:361px;width:1px;height:1px;background:#808080"></div>
<div style="left:64px;top:363px;width:1px;height:1px;background:#808080"></div>
<div style="left:87px;top:363px;width:1px;height:1px;background:#808080"></div>
<div style="left:64px;top:365px;width:1px;height:1px;background:#808080"></div>
<div style="left:87px;top:365px;width:1px;height:1px;background:#808080"></div>
<div style="left:64px;top:367px;width:1px;height:1px;background:#808080"></div>
<div style="left:87px;top:367px;width:1px;height:1px;background:#808080"></div>
<div style="left:64px;top:369px;width:1px;height:1px;background:#808080"></div>
<div style="left:87px;top:369px;width:1px;height:1px;background:#808080"></div>
<div style="left:64px;top:371px;width:1px;height:1px;background:#808080"></div>
<div style="left:87px;top:371px;width:1px;height:1px;background:#808080"></div>
<div style="left:64px;top:373px;width:1px;height:1px;background:#808080"></div>
<div style="left:87px;top:373px;width:1px;height:1px;background:#808080"></div>
<div style="left:64px;top:375px;width:1px;height:1px;background:#808080"></div>
<div style="left:87px;top:375px;width:1px;height:1px;background:#808080"></div>
<div style="left:64px;top:377px;width:1px;height:1px;background:#808080"></div>
<div style="left:87px;top:377px;width:1px;height:1px;background:#808080"></div>
<div style="left:64px;top:379px;width:1px;height:1px;background:#808080"></div>
<div style="left:87px;top:379px;width:1px;height:1px;background:#808080"></div>
<div style="left:64px;top:381px;width:1px;height:1px;background:#808080"></div>
<div style="left:87px;top:381px;width:1px;height:1px;background:#808080"></div>
<div style="left:64px;top:383px;width:1px;height:1px;background:#808080"></div>
<div style="left:87px;top:383px;width:1px;height:1px;background:#808080"></div>
<div style="left:64px;top:385px;width:1px;height:1px;background:#808080"></div>
<div style="left:87px;top:385px;width:1px;height:1px;background:#808080"></div>
<div style="left:64px;top:387px;width:1px;height:1px;background:#808080"></div>
<div style="left:87px;top:387px;width:1px;height:1px;background:#808080"></div>
<div style="left:64px;top:389px;width:1px;height:1px;background:#808080"></div>
<div style="left:87px;top:389px;width:1px;height:1px;background:#808080"></div>
<div style="left:64px;top:391px;width:1px;height:1px;background:#808080"></div>
<div style="left:87px;top:391px;width:1px;height:1px;background:#808080"></div>
<div style="left:64px;top:393px;width:1px;height:1px;background:#808080"></div>
<div style="left:87px;top:393px;width:1px;height:1px;background:#808080"></div>
<div style="left:64px;top:395px;width:1px;height:1px;background:#808080"></div>
<div style="left:87px;top:395px;width:1px;height:1px;background:#808080"></div>
<div style="left:64px;top:397px;width:1px;height:1px;background:#808080"></div>
<div style="left:87px;top:397px;width:1px;height:1px;background:#808080"></div>
<div style="left:64px;top:399px;width:1px;height:1px;background:#808080"></div>
<div style="left:87px;top:399px;width:1px;height:1px;background:#808080"></div>
<div style="left:64px;top:401px;width:1px;height:1px;background:#808080"></div>
<div style="left:87px;top:401px;width:1px;height:1px;background:#808080"></div>
<div style="left:64px;top:403px;width:1px;height:1px;background:#808080"></div>
<div style="left:87px;top:403px;width:1px;height:1px;background:#808080"></div>
<div style="left:64px;top:405px;width:1px;height:1px;background:#808080"></div>
<div style="left:87px;top:405px;width:1px;height:1px;background:#808080"></div>
<div style="left:64px;top:407px;width:1px;height:1px;background:#808080"></div>
<div style="left:87px;top:407px;width:1px;height:1px;background:#808080"></div>
<div style="left:64px;top:409px;width:1px;height:1px;background:#808080"></div>
<div style="left:87px;top:409px;width:1px;height:1px;background:#808080"></div>
<div style="left:64px;top:411px;width:1px;height:1px;background:#808080"></div>
<div style="left:87px;top:411px;width:1px;height:1px;background:#808080"></div>
<div style="left:64px;top:413px;width:1px;height:1px;background:#808080"></div>
<div style="left:87px;top:413px;width:1px;height:1px;background:#808080"></div>
<div style="left:64px;top:415px;width:1px;height:1px;background:#808080"></div>
<div style="left:87px;top:415px;width:1px;height:1px;background:#808080"></div>
<div style="left:64px;top:417px;width:1px;height:1px;background:#808080"></div>
<div style="left:87px;top:417px;width:1px;height:1px;background:#808080"></div>
<div style="left:64px;top:419px;width:1px;height:1px;background:#808080"></div>
<div style="left:87px;top:419px;width:1px;height:1px;background:#808080"></div>
<div style="left:64px;top:421px;width:1px;height:1px;background:#808080"></div>
<div style="left:87px;top:421px;width:1px;height:1px;background:#808080"></div>
<div style="left:64px;top:423px;width:1px;height:1px;background:#808080"></div>
<div style="left:87px;top:423px;width:1px;height:1px;background:#808080"></div>
<div style="left:64px;top:425px;width:1px;height:1px;background:#808080"></div>
<div style="left:87px;top:425px;width:1px;height:1px;background:#808080"></div>
<div style="left:64px;top:427px;width:1px;height:1px;background:#808080"></div>
<div style="left:87px;top:427px;width:1px;height:1px;background:#808080"></div>
<div style="left:64px;top:429px;width:1px;height:1px;background:#808080"></div>
<div style="left:87px;top:429px;width:1px;height:1px;background:#808080"></div>
<div style="left:64px;top:431px;width:1px;height:1px;background:#808080"></div>
<div style="left:87px;top:431px;width:1px;height:1px;background:#808080"></div>
<div style="left:64px;top:433px;width:1px;height:1px;background:#808080"></div>
<div style="left:87px;top:433px;width:1px;height:1px;background:#808080"></div>
<div style="left:64px;top:435px;width:1px;height:1px;background:#808080"></div>
<div style="left:87px;top:435px;width:1px;height:1px;background:#808080"></div>
<div style="left:64px;top:437px;width:1px;height:1px;background:#808080"></div>
<div style="left:87px;top:437px;width:1px;height:1px;background:#808080"></div>
<div style="left:64px;top:439px;width:1px;height:1px;background:#808080"></div>
<div style="left:87px;top:439px;width:1px;height:1px;background:#808080"></div>
<div style="left:64px;top:441px;width:1px;height:1px;background:#808080"></div>
<div style="left:87px;top:441px;width:1px;height:1px;background:#808080"></div>
<div style="left:64px;top:443px;width:1px;height:1px;background:#808080"></div>
<div style="left:87px;top:443px;width:1px;height:1px;background:#808080"></div>
<div style="left:64px;top:445px;width:1px;height:1px;background:#808080"></div>
<div style="left:87px;top:445px;width:1px;height:1px;background:#808080"></div>
<div style="left:64px;top:447px;width:1px;height:1px;background:#808080"></div>
<div style="left:87px;top:447px;width:1px;height:1px;background:#808080"></div>
<div style="left:64px;top:449px;width:1px;height:1px;background:#808080"></div>
<div style="left:87px;top:449px;width:1px;height:1px;background:#808080"></div>
<div style="left:64px;top:451px;width:1px;height:1px;background:#808080"></div>
<div style="left:87px;top:451px;width:1px;height:1px;background:#808080"></div>
<div style="left:64px;top:453px;width:1px;height:1px;background:#808080"></div>
<div style="left:87px;top:453px;width:1px;height:1px;background:#808080"></div>
<div style="left:64px;top:455px;width:1px;height:1px;background:#808080"></div>
<div style="left:87px;top:455px;width:1px;height:1px;background:#808080"></div>
<div style="left:64px;top:457px;width:1px;height:1px;background:#808080"></div>
<div style="left:87px;top:457px;width:1px;height:1px;background:#808080"></div>
<div style="left:64px;top:459px;width:1px;height:1px;background:#808080"></div>
<div style="left:87px;top:459px;width:1px;height:1px;background:#808080"></div>
<div style="left:64px;top:461px;width:1px;height:1px;background:#808080"></div>
<div style="left:87px;top:461px;width:1px;height:1px;background:#808080"></div>
<div style="left:64px;top:463px;width:1px;height:1px;background:#808080"></div>
<div style="left:87px;top:463px;width:1px;height:1px;background:#808080"></div>
<div style="left:64px;top:465px;width:1px;height:1px;background:#808080"></div>
<div style="left:87px;top:465px;width:1px;height:1px;background:#808080"></div>
<div style="left:64px;top:467px;width:1px;height:1px;background:#808080"></div>
<div style="left:87px;top:467px;width:1px;height:1px;background:#808080"></div>
<div style="left:64px;top:469px;width:1px;height:1px;background:#808080"></div>
<div style="left:87px;top:469px;width:1px;height:1px;background:#808080"></div>
<div style="left:64px;top:471px;width:1px;height:1px;background:#808080"></div>
<div style="left:87px;top:471px;width:1px;height:1px;background:#808080"></div>
<div style="left:64px;top:473px;width:1px;height:1px;background:#808080"></div>
<div style="left:87px;top:473px;width:1px;height:1px;background:#808080"></div>
<div style="left:64px;top:475px;width:1px;height:1px;background:#808080"></div>
<div style="left:87px;top:475px;width:1px;height:1px;background:#808080"></div>
<div style="left:64px;top:477px;width:1px;height:1px;background:#808080"></div>
<div style="left:87px;top:477px;width:1px;height:1px;background:#808080"></div>
<div style="left:64px;top:479px;width:1px;height:1px;background:#808080"></div>
<div style="left:87px;top:479px;width:1px;height:1px;background:#808080"></div>
<div style="left:64px;top:481px;width:1px;height:1px;background:#808080"></div>
<div style="left:87px;top:481px;width:1px;height:1px;background:#808080"></div>
<div style="left:64px;top:483px;width:1px;height:1px;background:#808080"></div>
<div style="left:87px;top:483px;width:1px;height:1px;background:#808080"></div>
<div style="left:64px;top:485px;width:1px;height:1px;background:#808080"></div>
<div style="left:87px;top:485px;width:1px;height:1px;background:#808080"></div>
<div style="left:64px;top:487px;width:1px;height:1px;background:#808080"></div>
<div style="left:87px;top:487px;width:1px;height:1px;background:#808080"></div>
<div style="left:64px;top:489px;width:1px;height:1px;background:#808080"></div>
<div style="left:87px;top:489px;width:1px;height:1px;background:#808080"></div>
<div style="left:64px;top:491px;width:1px;height:1px;background:#808080"></div>
<div style="left:87px;top:491px;width:1px;height:1px;background:#808080"></div>
<div style="left:64px;top:493px;width:1px;height:1px;background:#808080"></div>
<div style="left:87px;top:493px;width:1px;height:1px;background:#808080"></div>
<div style="left:64px;top:495px;width:1px;height:1px;background:#808080"></div>
<div style="left:87px;top:495px;width:1px;height:1px;background:#808080"></div>
<div style="left:64px;top:497px;width:1px;height:1px;background:#808080"></div>
<div style="left:87px;top:497px;width:1px;height:1px;background:#808080"></div>
<div style="left:64px;top:499px;width:1px;height:1px;background:#808080"></div>
<div style="left:87px;top:499px;width:1px;height:1px;background:#808080"></div>
<div style="left:64px;top:501px;width:1px;height:1px;background:#808080"></div>
<div style="left:87px;top:501px;width:1px;height:1px;background:#808080"></div>
<div style="left:64px;top:503px;width:1px;height:1px;background:#808080"></div>
<div style="left:87px;top:503px;width:1px;height:1px;background:#808080"></div>
<div style="left:64px;top:505px;width:1px;height:1px;background:#808080"></div>
<div style="left:87px;top:505px;width:1px;height:1px;background:#808080"></div>
<div style="left:64px;top:507px;width:1px;height:1px;background:#808080"></div>
<div style="left:87px;top:507px;width:1px;height:1px;background:#808080"></div>
<div style="left:64px;top:509px;width:1px;height:1px;background:#808080"></div>
<div style="left:87px;top:509px;width:1px;height:1px;background:#808080"></div>
<div style="left:64px;top:511px;width:1px;height:1px;background:#808080"></div>
<div style="left:87px;top:511px;width:1px;height:1px;background:#808080"></div>
<div style="left:64px;top:513px;width:1px;height:1px;background:#808080"></div>
<div style="left:87px;top:513px;width:1px;height:1px;background:#808080"></div>
<div style="left:64px;top:515px;width:1px;height:1px;background:#808080"></div>
<div style="left:87px;top:515px;width:1px;height:1px;background:#808080"></div>
<div style="left:64px;top:517px;width:1px;height:1px;background:#808080"></div>
<div style="left:87px;top:517px;width:1px;height:1px;background:#808080"></div>
<div style="left:64px;top:519px;width:1px;height:1px;background:#808080"></div>
<div style="left:87px;top:519px;width:1px;height:1px;background:#808080"></div>
<div style="left:64px;top:521px;width:1px;height:1px;background:#808080"></div>
<div style="left:87px;top:521px;width:1px;height:1px;background:#808080"></div>
<div style="left:64px;top:523px;width:1px;height:1px;background:#808080"></div>
<div style="left:87px;top:523px;width:1px;height:1px;background:#808080"></div>
<svg style="left:88px;top:265px" width="308" height="259" viewBox="0 0 308 259" shape-rendering="crispEdges"><path fill="#e4e4e4" d="M0 0h7v7h-7zM105 0h7v7h-7zM14 21h7v7h-7zM91 49h7v7h-7zM140 49h7v7h-7zM98 84h7v7h-7zM126 161h7v7h-7zM147 182h7v7h-7zM119 196h7v7h-7zM133 196h7v7h-7zM175 231h14v7h-14z"/><path fill="#d8dcdc" d="M7 0h7v7h-7zM119 0h7v7h-7zM140 98h7v7h-7zM182 119h7v7h-7z"/><path fill="#d8d8d8" d="M14 0h7v7h-7zM84 147h7v7h-7z"/><path fill="#f4f4f4" d="M21 0h7v7h-7zM133 0h7v7h-7zM21 14h7v7h-7zM56 14h7v7h-7zM91 14h7v7h-7zM133 14h7v7h-7zM49 28h7v7h-7zM49 105h7v7h-7zM203 182h7v7h-7zM98 196h7v7h-7zM231 196h7v7h-7zM105 245h7v7h-7z"/><path fill="#f0f0f0" d="M28 0h7v7h-7zM42 0h7v7h-7zM56 0h7v7h-7zM91 0h7v7h-7zM112 0h7v7h-7zM126 0h7v7h-7zM112 14h7v7h-7zM126 14h7v7h-7zM112 42h7v7h-7zM42 70h7v7h-7zM91 84h7v7h-7zM140 133h7v7h-7zM119 147h7v7h-7zM91 182h7v7h-7zM231 189h7v7h-7zM42 196h7v7h-7z"/><path fill="#f8f8f8" d="M35 0h7v7h-7zM49 0h7v7h-7zM147 0h7v7h-7zM49 14h7v7h-7zM70 14h7v7h-7zM84 14h7v7h-7zM105 14h7v7h-7zM147 14h7v7h-7zM0 28h7v7h-7zM21 28h7v7h-7zM0 35h7v7h-7zM21 35h7v7h-7zM0 42h7v7h-7zM21 42h7v7h-7zM0 49h7v7h-7zM21 49h7v7h-7zM0 56h7v7h-7zM21 56h7v7h-7zM0 63h7v7h-7zM21 63h7v7h-7zM0 70h7v7h-7zM21 70h7v7h-7zM49 70h7v7h-7zM98 70h7v7h-7zM0 77h7v7h-7zM21 77h7v7h-7zM0 84h7v7h-7zM21 84h7v7h-7zM49 84h7v7h-7zM0 91h7v7h-7zM21 91h7v7h-7zM0 98h7v7h-7zM21 98h7v7h-7zM0 105h7v7h-7zM21 105h7v7h-7zM0 112h7v7h-7zM21 112h7v7h-7zM0 119h7v7h-7zM21 119h7v7h-7zM0 126h7v7h-7zM21 126h7v7h-7zM0 133h7v7h-7zM21 133h7v7h-7zM0 140h7v7h-7zM21 140h7v7h-7zM0 147h7v7h-7zM21 147h7v7h-7zM0 154h7v7h-7zM21 154h7v7h-7zM0 161h7v7h-7zM21 161h7v7h-7zM0 168h7v7h-7zM21 168h7v7h-7zM0 175h7v7h-7zM21 175h7v7h-7zM0 182h7v7h-7zM21 182h7v7h-7zM49 182h7v7h-7zM105 182h7v7h-7zM0 189h7v7h-7zM21 189h7v7h-7zM0 196h7v7h-7zM21 196h7v7h-7zM49 196h7v7h-7zM0 203h7v7h-7zM21 203h7v7h-7zM98 203h7v7h-7zM0 210h7v7h-7zM21 210h7v7h-7zM0 217h7v7h-7zM21 217h7v7h-7zM0 224h7v7h-7zM21 224h7v7h-7zM0 231h7v7h-7zM21 231h7v7h-7zM0 238h7v7h-7zM21 238h7v7h-7zM0 245h7v7h-7zM21 245h7v7h-7zM161 245h7v7h-7zM0 252h7v7h-7zM21 252h7v7h-7z"/><path fill="#ececec" d="M63 0h7v7h-7zM42 14h7v7h-7zM77 14h7v7h-7zM119 14h7v7h-7zM112 70h7v7h-7zM154 182h7v7h-7z"/><path fill="#f4f0f0" d="M70 0h7v7h-7z"/><path fill="#d8d8dc" d="M77 0h7v7h-7zM105 28h7v7h-7zM98 252h7v7h-7z"/><path fill="#ecf0f0" d="M84 0h7v7h-7zM140 252h7v7h-7z"/><path fill="#f4f4f8" d="M98 0h7v7h-7zM49 49h7v7h-7z"/><path fill="#f4f0f4" d="M140 0h7v7h-7zM126 49h7v7h-7z"/><path fill="#bcb4c0" d="M0 7h7v7h-7z"/><path fill="#acb0b0" d="M7 7h7v7h-7zM119 77h7v7h-7z"/><path fill="#c8c8cc" d="M14 7h7v7h-7zM147 7h7v7h-7zM91 35h7v7h-7zM98 49h7v7h-7zM154 119h7v7h-7zM84 126h7v7h-7zM112 210h7v7h-7zM154 238h7v7h-7z"/><path fill="#b0a8b4" d="M21 7h7v7h-7z"/><path fill="#c4bcc0" d="M28 7h7v7h-7zM147 56h7v7h-7z"/><path fill="#b4bcbc" d="M35 7h7v7h-7zM112 7h7v7h-7z"/><path fill="#98a4a4" d="M42 7h7v7h-7z"/><path fill="#b4b4b8" d="M49 7h7v7h-7zM91 77h7v7h-7z"/><path fill="#b8b4bc" d="M56 7h7v7h-7zM105 7h7v7h-7zM112 77h7v7h-7z"/><path fill="#acacac" d="M63 7h7v7h-7z"/><path fill="#c8c4c8" d="M70 7h7v7h-7zM91 147h7v7h-7zM91 189h7v7h-7z"/><path fill="#9c9c98" d="M77 7h7v7h-7z"/><path fill="#c8c8d0" d="M84 7h7v7h-7z"/><path fill="#a8a4a8" d="M91 7h7v7h-7z"/><path fill="#b0b0ac" d="M98 7h7v7h-7z"/><path fill="#a0a098" d="M119 7h7v7h-7z"/><path fill="#d0cccc" d="M126 7h7v7h-7zM147 49h7v7h-7zM42 77h7v7h-7zM119 126h7v7h-7zM91 210h7v7h-7z"/><path fill="#bcb4bc" d="M133 7h7v7h-7zM175 126h7v7h-7z"/><path fill="#b8c0b8" d="M140 7h7v7h-7zM126 56h7v7h-7z"/><path fill="#f4f8f8" d="M0 14h7v7h-7z"/><path fill="#f8f4f8" d="M7 14h7v7h-7z"/><path fill="#f0f0f4" d="M14 14h7v7h-7zM133 84h7v7h-7zM42 182h7v7h-7z"/><path fill="#f0ecec" d="M28 14h7v7h-7zM154 196h7v7h-7zM119 217h7v7h-7z"/><path fill="#e8e8e4" d="M35 14h7v7h-7zM49 56h7v7h-7z"/><path fill="#f0f4f4" d="M63 14h7v7h-7z"/><path fill="#e0e0e0" d="M98 14h7v7h-7zM28 21h14v7h-14zM56 21h14v7h-14zM105 21h21v7h-21zM133 21h14v7h-14zM154 21h7v7h-7zM182 21h21v7h-21zM217 21h7v7h-7zM238 21h14v7h-14zM266 21h7v7h-7zM287 21h14v7h-14zM91 70h7v7h-7zM154 84h7v7h-7zM126 105h7v7h-7zM140 105h7v7h-7zM168 119h7v7h-7zM217 126h7v7h-7zM112 161h7v7h-7zM140 161h7v7h-7zM182 196h7v7h-7z"/><path fill="#f0f4f0" d="M140 14h7v7h-7zM42 84h7v7h-7z"/><path fill="#dce0dc" d="M0 21h7v7h-7zM98 217h7v7h-7z"/><path fill="#e4e4e0" d="M7 21h7v7h-7zM49 21h7v7h-7zM273 21h7v7h-7zM91 217h7v7h-7z"/><path fill="#e0dcdc" d="M21 21h7v7h-7zM168 196h7v7h-7zM112 252h7v7h-7z"/><path fill="#e4e0e0" d="M42 21h7v7h-7zM70 21h14v7h-14zM91 21h14v7h-14zM210 21h7v7h-7zM301 21h7v7h-7zM84 70h7v7h-7zM98 161h7v7h-7z"/><path fill="#e0e4e0" d="M84 21h7v7h-7zM147 21h7v7h-7zM168 21h14v7h-14zM203 21h7v7h-7zM224 21h7v7h-7zM259 21h7v7h-7zM280 21h7v7h-7zM119 49h7v7h-7z"/><path fill="#e4e0e4" d="M126 21h7v7h-7zM252 21h7v7h-7zM203 119h7v7h-7zM140 196h14v7h-14zM203 196h7v7h-7z"/><path fill="#e0e0e4" d="M161 21h7v7h-7zM231 21h7v7h-7zM196 196h7v7h-7zM224 196h7v7h-7zM133 238h7v7h-7z"/><path fill="#ece8e8" d="M42 28h7v7h-7zM119 140h7v7h-7zM49 189h7v7h-7z"/><path fill="#e0f0fc" d="M56 28h7v7h-7zM77 28h7v7h-7zM56 35h7v7h-7zM77 35h7v7h-7z"/><path fill="#2098f0" d="M63 28h14v7h-14zM63 35h14v7h-14z"/><path fill="#cccccc" d="M84 28h7v7h-7zM105 231h7v7h-7zM161 231h7v7h-7z"/><path fill="#d8d4d8" d="M91 28h7v7h-7zM182 126h7v7h-7zM112 196h7v7h-7zM98 238h7v7h-7zM119 252h7v7h-7z"/><path fill="#d4d0d4" d="M98 28h7v7h-7zM119 168h7v7h-7zM189 196h7v7h-7zM105 238h7v7h-7z"/><path fill="#dcdcdc" d="M112 28h7v7h-7zM154 49h7v7h-7zM112 84h7v7h-7zM119 105h7v7h-7zM84 196h7v7h-7zM217 196h7v7h-7z"/><path fill="#d4d4d4" d="M119 28h7v7h-7z"/><path fill="#e8e8e8" d="M126 28h7v7h-7zM49 35h7v7h-7zM105 84h7v7h-7zM49 98h7v7h-7zM42 105h7v7h-7zM112 105h7v7h-7zM133 161h7v7h-7zM161 161h7v7h-7zM210 196h7v7h-7z"/><path fill="#ccc4cc" d="M42 35h7v7h-7zM203 126h7v7h-7zM105 140h7v7h-7z"/><path fill="#bcb8b8" d="M84 35h7v7h-7z"/><path fill="#bcc0c0" d="M98 35h7v7h-7zM119 189h7v7h-7z"/><path fill="#b0acb0" d="M105 35h7v7h-7zM105 98h7v7h-7zM105 189h7v7h-7z"/><path fill="#b8bcbc" d="M112 35h7v7h-7zM140 77h7v7h-7z"/><path fill="#b8b4b4" d="M119 35h7v7h-7zM91 98h7v7h-7z"/><path fill="#b8bcc0" d="M126 35h7v7h-7z"/><path fill="#f8fcff" d="M56 42h7v7h-7zM56 203h7v7h-7zM77 203h7v7h-7z"/><path fill="#c0e0fc" d="M63 42h14v7h-14z"/><path fill="#f8f8ff" d="M77 42h7v7h-7z"/><path fill="#f0f0ec" d="M119 42h7v7h-7zM42 49h7v7h-7z"/><path fill="#f4f8fc" d="M56 49h7v7h-7zM77 49h7v7h-7z"/><path fill="#a4c8e4" d="M63 49h14v7h-14z"/><path fill="#c4c0c8" d="M84 49h7v7h-7zM175 189h7v7h-7zM84 231h7v7h-7z"/><path fill="#e8e8ec" d="M105 49h7v7h-7zM84 84h7v7h-7zM84 203h7v7h-7z"/><path fill="#e4e4e8" d="M112 49h7v7h-7zM140 84h7v7h-7zM91 196h7v7h-7zM105 196h7v7h-7zM175 196h7v7h-7z"/><path fill="#ccc4c4" d="M133 49h7v7h-7z"/><path fill="#c0c8c0" d="M42 56h7v7h-7z"/><path fill="#f0f4fc" d="M56 56h7v7h-7zM56 84h7v7h-7zM77 84h7v7h-7z"/><path fill="#98c0e0" d="M63 56h14v7h-14z"/><path fill="#f0f4f8" d="M77 56h7v7h-7z"/><path fill="#aca4ac" d="M84 56h7v7h-7z"/><path fill="#b8c0bc" d="M91 56h7v7h-7zM112 147h7v7h-7z"/><path fill="#c0c4c0" d="M98 56h7v7h-7z"/><path fill="#a8a4a4" d="M105 56h7v7h-7zM84 119h7v7h-7z"/><path fill="#a09ca4" d="M112 56h7v7h-7z"/><path fill="#c4c8c4" d="M119 56h7v7h-7z"/><path fill="#989c9c" d="M133 56h7v7h-7z"/><path fill="#c0b4bc" d="M140 56h7v7h-7z"/><path fill="#aca8a4" d="M154 56h7v7h-7z"/><path fill="#f8fcfc" d="M56 63h7v7h-7zM77 63h7v7h-7zM77 154h7v7h-7zM56 224h7v7h-7zM77 224h7v7h-7z"/><path fill="#d0e4f4" d="M63 63h14v7h-14z"/><path fill="#ecf4fc" d="M56 70h7v7h-7zM77 70h7v7h-7zM56 210h7v7h-7z"/><path fill="#80b4e8" d="M63 70h14v7h-14z"/><path fill="#ececf0" d="M133 70h7v7h-7zM168 161h7v7h-7zM168 182h7v7h-7zM196 182h7v7h-7zM112 217h7v7h-7z"/><path fill="#ecece8" d="M49 77h7v7h-7z"/><path fill="#e4f0f8" d="M56 77h7v7h-7z"/><path fill="#5098dc" d="M63 77h14v7h-14z"/><path fill="#e4f0fc" d="M77 77h7v7h-7zM77 147h7v7h-7z"/><path fill="#b0b4b0" d="M84 77h7v7h-7z"/><path fill="#a4aca8" d="M98 77h7v7h-7z"/><path fill="#aca8ac" d="M105 77h7v7h-7z"/><path fill="#b0b4bc" d="M126 77h7v7h-7z"/><path fill="#9c9cac" d="M133 77h7v7h-7z"/><path fill="#acb0ac" d="M147 77h7v7h-7z"/><path fill="#dce0e0" d="M154 77h7v7h-7zM98 140h7v7h-7zM112 140h7v7h-7z"/><path fill="#9cc4ec" d="M63 84h14v7h-14z"/><path fill="#ccc8d0" d="M119 84h7v7h-7z"/><path fill="#e8ece8" d="M126 84h7v7h-7z"/><path fill="#e4e8e8" d="M147 84h7v7h-7zM91 161h7v7h-7zM154 161h7v7h-7z"/><path fill="#fffcf4" d="M56 91h7v7h-7zM77 175h7v7h-7zM56 196h7v7h-7zM77 196h7v7h-7z"/><path fill="#fcdcb4" d="M63 91h14v7h-14z"/><path fill="#fff8f4" d="M77 91h7v7h-7z"/><path fill="#e8e4e8" d="M84 91h7v7h-7zM98 119h7v7h-7zM126 196h7v7h-7z"/><path fill="#f0ecf0" d="M91 91h7v7h-7zM210 182h7v7h-7z"/><path fill="#ccc8c8" d="M42 98h7v7h-7z"/><path fill="#fff4e4" d="M56 98h7v7h-7z"/><path fill="#f4a850" d="M63 98h14v7h-14z"/><path fill="#fcf0e8" d="M77 98h7v7h-7z"/><path fill="#ccd4d0" d="M84 98h7v7h-7zM133 231h7v7h-7z"/><path fill="#c4bcc4" d="M98 98h7v7h-7zM105 168h7v7h-7z"/><path fill="#c0c8c4" d="M112 98h7v7h-7z"/><path fill="#b4b4b0" d="M119 98h7v7h-7zM154 189h7v7h-7z"/><path fill="#c8c0c4" d="M126 98h7v7h-7z"/><path fill="#d0ccd0" d="M133 98h7v7h-7zM119 161h7v7h-7zM112 231h7v7h-7z"/><path fill="#fcf4ec" d="M56 105h7v7h-7z"/><path fill="#f8b868" d="M63 105h14v7h-14z"/><path fill="#fcf8e8" d="M77 105h7v7h-7zM77 119h7v7h-7zM77 189h7v7h-7z"/><path fill="#e0dce0" d="M84 105h7v7h-7zM105 161h7v7h-7z"/><path fill="#dcd8dc" d="M91 105h7v7h-7zM105 217h7v7h-7zM105 252h7v7h-7z"/><path fill="#b0b0b4" d="M98 105h7v7h-7z"/><path fill="#dce0e4" d="M105 105h7v7h-7z"/><path fill="#d8e0dc" d="M133 105h7v7h-7z"/><path fill="#fffcf8" d="M56 112h7v7h-7zM77 112h7v7h-7zM56 175h7v7h-7z"/><path fill="#fcf4d4" d="M63 112h14v7h-14z"/><path fill="#fcf8ec" d="M56 119h7v7h-7zM56 252h7v7h-7z"/><path fill="#f8d870" d="M63 119h14v7h-14zM63 126h14v7h-14zM63 168h14v7h-14zM63 189h14v7h-14zM63 252h14v7h-14z"/><path fill="#d0d0cc" d="M91 119h7v7h-7zM168 126h7v7h-7zM168 168h7v7h-7z"/><path fill="#acb0a8" d="M105 119h7v7h-7z"/><path fill="#ccccd0" d="M112 119h7v7h-7zM154 126h7v7h-7z"/><path fill="#c0c4c8" d="M119 119h7v7h-7z"/><path fill="#c4c4cc" d="M126 119h7v7h-7z"/><path fill="#c0bcc4" d="M133 119h7v7h-7z"/><path fill="#ccd0d0" d="M140 119h7v7h-7zM126 252h7v7h-7z"/><path fill="#ccc8cc" d="M147 119h7v7h-7zM126 231h7v7h-7z"/><path fill="#c0b8bc" d="M161 119h7v7h-7zM161 189h7v7h-7z"/><path fill="#ccd0d4" d="M175 119h7v7h-7z"/><path fill="#c4c4bc" d="M189 119h7v7h-7z"/><path fill="#b8c0c0" d="M196 119h7v7h-7z"/><path fill="#d4d4d8" d="M210 119h7v7h-7z"/><path fill="#d0d0d8" d="M217 119h7v7h-7z"/><path fill="#fff8ec" d="M56 126h7v7h-7zM77 126h7v7h-7zM77 161h7v7h-7zM56 189h7v7h-7z"/><path fill="#d0d0d0" d="M91 126h7v7h-7z"/><path fill="#ccc8d4" d="M98 126h7v7h-7zM140 231h7v7h-7z"/><path fill="#b0b4b8" d="M105 126h7v7h-7z"/><path fill="#c4c4c8" d="M112 126h7v7h-7zM154 231h7v7h-7z"/><path fill="#c0c0c0" d="M126 126h7v7h-7zM189 189h7v7h-7z"/><path fill="#ccc4c8" d="M133 126h7v7h-7zM168 231h7v7h-7z"/><path fill="#b8b8b0" d="M140 126h7v7h-7z"/><path fill="#d4d0d8" d="M147 126h7v7h-7z"/><path fill="#c4c0c4" d="M161 126h7v7h-7z"/><path fill="#c0c4c4" d="M189 126h7v7h-7z"/><path fill="#dcd8d8" d="M196 126h7v7h-7zM84 217h7v7h-7z"/><path fill="#a4acac" d="M210 126h7v7h-7z"/><path fill="#e4ecf8" d="M56 140h7v7h-7z"/><path fill="#488ce0" d="M63 140h14v7h-14zM63 147h14v7h-14z"/><path fill="#e8ecf8" d="M77 140h7v7h-7z"/><path fill="#bcbcbc" d="M84 140h7v7h-7z"/><path fill="#dcdcd8" d="M91 140h7v7h-7zM126 182h7v7h-7z"/><path fill="#e8ecfc" d="M56 147h7v7h-7z"/><path fill="#b4b0b0" d="M98 147h7v7h-7z"/><path fill="#b8b8b4" d="M105 147h7v7h-7zM133 189h7v7h-7z"/><path fill="#f8f8fc" d="M56 154h7v7h-7z"/><path fill="#cce0f8" d="M63 154h14v7h-14z"/><path fill="#fffcf0" d="M56 161h7v7h-7z"/><path fill="#fcdc84" d="M63 161h14v7h-14z"/><path fill="#d4d4dc" d="M84 161h7v7h-7z"/><path fill="#c8c4c4" d="M147 161h7v7h-7zM119 231h7v7h-7z"/><path fill="#fcfce8" d="M56 168h7v7h-7z"/><path fill="#fff8e8" d="M77 168h7v7h-7z"/><path fill="#a4a4ac" d="M84 168h7v7h-7z"/><path fill="#ccd0cc" d="M91 168h7v7h-7z"/><path fill="#d4d8dc" d="M98 168h7v7h-7z"/><path fill="#c4c4c4" d="M112 168h7v7h-7z"/><path fill="#b0b0a4" d="M126 168h7v7h-7z"/><path fill="#bcb4b4" d="M133 168h7v7h-7z"/><path fill="#d8d4dc" d="M140 168h7v7h-7z"/><path fill="#9890a0" d="M147 168h7v7h-7z"/><path fill="#c8c4cc" d="M154 168h7v7h-7z"/><path fill="#a098a8" d="M161 168h7v7h-7z"/><path fill="#fcecc0" d="M63 175h14v7h-14z"/><path fill="#fcf8f0" d="M56 182h7v7h-7z"/><path fill="#fce498" d="M63 182h14v7h-14z"/><path fill="#fcfcf0" d="M77 182h7v7h-7z"/><path fill="#d4d8d8" d="M84 182h7v7h-7z"/><path fill="#d4cccc" d="M42 189h7v7h-7z"/><path fill="#bcbcc0" d="M84 189h7v7h-7zM217 189h7v7h-7zM91 231h7v7h-7z"/><path fill="#bcb8c0" d="M98 189h7v7h-7z"/><path fill="#b0b4b4" d="M112 189h7v7h-7z"/><path fill="#9c90a4" d="M126 189h7v7h-7z"/><path fill="#b8b8b8" d="M140 189h7v7h-7z"/><path fill="#a4a8a4" d="M147 189h7v7h-7z"/><path fill="#a0a09c" d="M168 189h7v7h-7z"/><path fill="#a4a098" d="M182 189h7v7h-7z"/><path fill="#9c9ca8" d="M196 189h7v7h-7z"/><path fill="#b4b0ac" d="M203 189h7v7h-7z"/><path fill="#c0bcc0" d="M210 189h7v7h-7z"/><path fill="#a8b4b0" d="M224 189h7v7h-7z"/><path fill="#fce8ac" d="M63 196h14v7h-14z"/><path fill="#e0e4e4" d="M161 196h7v7h-7z"/><path fill="#c4e4f8" d="M63 203h14v7h-14z"/><path fill="#78c0f0" d="M63 210h14v7h-14z"/><path fill="#ecf8fc" d="M77 210h7v7h-7zM56 217h7v7h-7z"/><path fill="#a8a8b4" d="M84 210h7v7h-7z"/><path fill="#b8b8bc" d="M98 210h7v7h-7z"/><path fill="#aca4a8" d="M105 210h7v7h-7z"/><path fill="#dcdce0" d="M119 210h7v7h-7z"/><path fill="#8cc8f4" d="M63 217h14v7h-14z"/><path fill="#f0f8fc" d="M77 217h7v7h-7z"/><path fill="#d0e4f8" d="M63 224h14v7h-14z"/><path fill="#e8f4fc" d="M56 231h7v7h-7z"/><path fill="#58a0e8" d="M63 231h14v7h-14zM63 238h14v7h-14z"/><path fill="#e8f0fc" d="M77 231h7v7h-7zM56 238h7v7h-7z"/><path fill="#bcb4b8" d="M98 231h7v7h-7z"/><path fill="#c8cccc" d="M147 231h7v7h-7z"/><path fill="#e8f0f8" d="M77 238h7v7h-7z"/><path fill="#d0d4d4" d="M84 238h7v7h-7z"/><path fill="#c4c4c0" d="M91 238h7v7h-7z"/><path fill="#bcc0bc" d="M112 238h7v7h-7z"/><path fill="#ccccc8" d="M119 238h7v7h-7z"/><path fill="#c4c0c0" d="M126 238h7v7h-7z"/><path fill="#d4d4d0" d="M140 238h7v7h-7zM182 238h7v7h-7z"/><path fill="#b8b4c0" d="M147 238h7v7h-7z"/><path fill="#b8bcb4" d="M161 238h7v7h-7z"/><path fill="#c0bcbc" d="M168 238h7v7h-7z"/><path fill="#c0b8c0" d="M175 238h7v7h-7z"/><path fill="#fffce8" d="M77 252h7v7h-7z"/><path fill="#c0b8c4" d="M84 252h7v7h-7z"/><path fill="#c4c8c8" d="M91 252h7v7h-7z"/><path fill="#d8d4d4" d="M133 252h7v7h-7z"/></svg>
<svg style="left:8px;top:556px" width="603" height="180" viewBox="0 0 603 180" shape-rendering="crispEdges"><path fill="#f8fcfc" d="M198 0h9v9h-9z"/><path fill="#fcfcfc" d="M306 0h9v9h-9zM450 0h9v9h-9zM324 54h9v9h-9zM135 153h9v9h-9zM27 171h9v9h-9zM54 171h9v9h-9zM90 171h9v9h-9zM324 171h18v9h-18zM477 171h9v9h-9zM540 171h9v9h-9zM558 171h9v9h-9z"/><path fill="#fce088" d="M0 9h9v9h-9zM0 18h9v9h-9zM0 36h9v9h-9zM9 45h9v9h-9zM0 63h9v9h-9zM0 81h9v9h-9zM0 90h9v9h-9zM0 108h9v9h-9z"/><path fill="#f8dc78" d="M9 9h9v9h-9zM9 18h9v9h-9zM9 36h9v9h-9zM9 63h9v9h-9zM9 81h9v9h-9zM9 90h9v9h-9zM9 108h9v9h-9z"/><path fill="#fcfcf0" d="M18 9h9v9h-9z"/><path fill="#f8f4e8" d="M18 18h9v9h-9z"/><path fill="#f8f8f8" d="M27 18h9v9h-9zM540 45h9v9h-9zM540 81h9v9h-9zM540 90h9v9h-9zM90 117h9v9h-9zM540 117h9v9h-9zM54 126h9v9h-9zM117 126h9v9h-9zM144 126h9v9h-9zM180 126h9v9h-9zM198 126h9v9h-9zM333 126h9v9h-9zM468 171h9v9h-9zM486 171h18v9h-18zM522 171h18v9h-18zM549 171h9v9h-9z"/><path fill="#fcecbc" d="M0 27h9v9h-9zM0 99h9v9h-9z"/><path fill="#fcecb4" d="M9 27h9v9h-9zM9 99h9v9h-9z"/><path fill="#fffcf8" d="M18 27h9v9h-9zM18 99h9v9h-9z"/><path fill="#c8c4bc" d="M18 36h9v9h-9z"/><path fill="#bcb8c4" d="M27 36h9v9h-9z"/><path fill="#ccc4cc" d="M36 36h9v9h-9zM522 135h9v9h-9z"/><path fill="#ccc8c8" d="M45 36h9v9h-9zM468 63h9v9h-9zM513 81h9v9h-9zM477 108h9v9h-9z"/><path fill="#c4c4c4" d="M54 36h9v9h-9z"/><path fill="#d0d4d8" d="M63 36h9v9h-9zM522 90h9v9h-9zM459 135h9v9h-9zM468 162h9v9h-9z"/><path fill="#c8c4c8" d="M72 36h9v9h-9zM504 63h9v9h-9zM162 90h9v9h-9zM333 90h9v9h-9zM531 135h9v9h-9zM567 135h9v9h-9z"/><path fill="#d0c8cc" d="M81 36h9v9h-9z"/><path fill="#f0f0f0" d="M90 36h9v9h-9zM333 54h9v9h-9zM558 81h9v9h-9zM171 126h9v9h-9zM585 153h9v9h-9zM540 162h9v9h-9z"/><path fill="#bcb0b4" d="M315 36h9v9h-9zM36 135h9v9h-9z"/><path fill="#c8c4cc" d="M324 36h9v9h-9zM504 36h9v9h-9zM72 90h9v9h-9z"/><path fill="#c8c0c0" d="M333 36h9v9h-9z"/><path fill="#d4d0d0" d="M342 36h9v9h-9zM495 90h9v9h-9z"/><path fill="#ccccd0" d="M351 36h9v9h-9zM324 90h9v9h-9zM477 90h9v9h-9zM297 153h9v9h-9zM468 153h9v9h-9zM567 153h9v9h-9z"/><path fill="#c0c0c0" d="M360 36h9v9h-9zM567 63h9v9h-9zM180 90h9v9h-9zM162 135h9v9h-9zM189 135h9v9h-9zM468 135h9v9h-9zM576 153h9v9h-9z"/><path fill="#d0cccc" d="M459 36h9v9h-9zM531 36h9v9h-9zM558 36h9v9h-9zM585 63h9v9h-9z"/><path fill="#b8b8b8" d="M468 36h9v9h-9z"/><path fill="#d0d0d0" d="M477 36h9v9h-9zM90 81h9v9h-9zM531 81h9v9h-9zM504 135h9v9h-9zM351 162h9v9h-9z"/><path fill="#bcc0bc" d="M486 36h9v9h-9z"/><path fill="#c0c4c0" d="M495 36h9v9h-9zM576 135h9v9h-9z"/><path fill="#b0b4b8" d="M513 36h9v9h-9zM513 108h9v9h-9z"/><path fill="#d4d4d4" d="M522 36h9v9h-9zM54 153h9v9h-9zM315 153h9v9h-9zM369 153h9v9h-9z"/><path fill="#e4e0e0" d="M540 36h9v9h-9zM162 81h9v9h-9zM189 90h9v9h-9zM72 117h9v9h-9zM279 126h9v9h-9zM540 135h9v9h-9z"/><path fill="#b8b8bc" d="M549 36h9v9h-9zM45 135h9v9h-9z"/><path fill="#b4b8b8" d="M567 36h9v9h-9zM144 135h9v9h-9z"/><path fill="#b8bcb0" d="M576 36h9v9h-9z"/><path fill="#e4e8e8" d="M585 36h9v9h-9zM54 45h9v9h-9zM531 54h9v9h-9zM351 81h9v9h-9zM90 108h9v9h-9zM585 108h9v9h-9zM468 117h9v9h-9z"/><path fill="#b4acb0" d="M594 36h9v9h-9z"/><path fill="#fce494" d="M0 45h9v9h-9z"/><path fill="#f4f0e8" d="M18 45h9v9h-9z"/><path fill="#e4e4e8" d="M27 45h9v9h-9zM72 45h9v9h-9zM549 54h9v9h-9zM369 90h9v9h-9zM54 117h9v9h-9zM558 117h9v9h-9zM576 117h9v9h-9zM315 126h9v9h-9zM558 126h9v9h-9zM342 153h9v9h-9z"/><path fill="#e0dce0" d="M36 45h9v9h-9zM324 117h9v9h-9zM252 126h9v9h-9z"/><path fill="#ececec" d="M45 45h9v9h-9zM477 45h9v9h-9zM27 54h9v9h-9zM459 54h18v9h-18zM522 54h9v9h-9zM540 54h9v9h-9zM585 54h9v9h-9zM189 81h9v9h-9zM576 90h9v9h-9zM423 162h9v9h-9z"/><path fill="#e0e0e0" d="M63 45h9v9h-9zM360 45h9v9h-9zM486 45h9v9h-9zM540 108h9v9h-9zM477 126h9v9h-9zM522 126h9v9h-9zM567 126h9v9h-9zM72 153h9v9h-9zM360 153h9v9h-9zM396 153h9v9h-9zM459 162h9v9h-9z"/><path fill="#e4e8e4" d="M81 45h9v9h-9zM468 45h9v9h-9zM27 81h9v9h-9z"/><path fill="#f4f4f4" d="M90 45h9v9h-9zM531 45h9v9h-9zM567 45h9v9h-9zM72 54h9v9h-9zM54 72h18v9h-18zM108 72h9v9h-9zM315 117h9v9h-9zM369 117h9v9h-9zM36 126h18v9h-18zM81 126h9v9h-9zM99 126h18v9h-18zM153 126h9v9h-9zM189 126h9v9h-9zM342 126h18v9h-18zM27 153h9v9h-9zM504 171h9v9h-9z"/><path fill="#f4f4f0" d="M315 45h9v9h-9z"/><path fill="#e4e4e4" d="M324 45h9v9h-9zM522 45h9v9h-9zM558 45h9v9h-9zM315 54h9v9h-9zM486 54h9v9h-9zM504 54h18v9h-18zM171 81h9v9h-9zM81 117h9v9h-9zM360 117h9v9h-9zM504 117h9v9h-9zM531 117h9v9h-9zM549 117h9v9h-9zM567 117h9v9h-9zM594 117h9v9h-9zM495 126h9v9h-9zM63 162h9v9h-9z"/><path fill="#e0e4e0" d="M333 45h9v9h-9zM414 153h9v9h-9z"/><path fill="#e0dce4" d="M342 45h9v9h-9zM180 81h9v9h-9zM36 117h9v9h-9z"/><path fill="#e0e4e4" d="M351 45h9v9h-9zM594 45h9v9h-9zM594 54h9v9h-9zM351 117h9v9h-9z"/><path fill="#e8e8e8" d="M459 45h9v9h-9zM99 81h9v9h-9zM333 81h9v9h-9zM585 81h9v9h-9zM315 90h9v9h-9zM558 90h9v9h-9zM63 117h9v9h-9zM27 126h9v9h-9zM90 126h9v9h-9zM162 126h9v9h-9zM297 126h9v9h-9zM423 153h9v9h-9zM540 153h9v9h-9z"/><path fill="#e4e0e4" d="M495 45h9v9h-9zM513 45h9v9h-9zM54 81h9v9h-9zM27 117h9v9h-9zM495 117h9v9h-9zM513 117h18v9h-18zM486 126h9v9h-9zM270 135h9v9h-9z"/><path fill="#e8e8e4" d="M504 45h9v9h-9z"/><path fill="#e8e4e8" d="M549 45h9v9h-9zM459 117h9v9h-9zM63 126h9v9h-9z"/><path fill="#f0f0f4" d="M576 45h9v9h-9zM126 126h9v9h-9zM594 171h9v9h-9z"/><path fill="#e8ecec" d="M585 45h9v9h-9zM585 117h9v9h-9z"/><path fill="#fcecb0" d="M0 54h9v9h-9zM0 72h9v9h-9z"/><path fill="#fce8a4" d="M9 54h9v9h-9zM9 72h9v9h-9z"/><path fill="#f0f0e8" d="M18 54h9v9h-9z"/><path fill="#ececf0" d="M477 54h9v9h-9zM315 171h9v9h-9z"/><path fill="#f0f4f0" d="M495 54h9v9h-9z"/><path fill="#f8f4f8" d="M558 54h9v9h-9zM297 171h9v9h-9zM459 171h9v9h-9zM513 171h9v9h-9z"/><path fill="#dce0dc" d="M567 54h9v9h-9zM414 162h9v9h-9zM477 162h9v9h-9z"/><path fill="#e8e8ec" d="M576 54h9v9h-9zM324 72h9v9h-9zM369 81h9v9h-9zM9 126h18v9h-18z"/><path fill="#d8d8c8" d="M18 63h9v9h-9z"/><path fill="#c0bcc0" d="M27 63h9v9h-9zM531 63h9v9h-9zM351 135h9v9h-9z"/><path fill="#b4b4b4" d="M36 63h9v9h-9z"/><path fill="#b0b4b4" d="M45 63h9v9h-9z"/><path fill="#aca4b0" d="M54 63h9v9h-9z"/><path fill="#a8a8b4" d="M63 63h9v9h-9z"/><path fill="#b0b8b4" d="M72 63h9v9h-9zM486 63h9v9h-9z"/><path fill="#acb4b0" d="M81 63h9v9h-9zM351 63h9v9h-9z"/><path fill="#b4b0b0" d="M90 63h9v9h-9zM117 63h9v9h-9z"/><path fill="#b8b8b4" d="M99 63h9v9h-9z"/><path fill="#b0b0b0" d="M108 63h9v9h-9zM288 135h9v9h-9z"/><path fill="#b0acb0" d="M126 63h9v9h-9z"/><path fill="#d4d0d4" d="M135 63h9v9h-9zM315 81h9v9h-9zM486 90h9v9h-9zM63 108h9v9h-9zM126 162h9v9h-9zM594 162h9v9h-9z"/><path fill="#c4c4c8" d="M315 63h9v9h-9zM504 108h9v9h-9zM117 135h9v9h-9z"/><path fill="#b4b4bc" d="M324 63h9v9h-9z"/><path fill="#98a0a4" d="M333 63h9v9h-9z"/><path fill="#a8b0b8" d="M342 63h9v9h-9z"/><path fill="#b4b4b8" d="M360 63h9v9h-9zM81 135h9v9h-9z"/><path fill="#d8d8d8" d="M369 63h9v9h-9zM540 63h9v9h-9zM153 81h9v9h-9zM99 90h9v9h-9zM594 90h9v9h-9zM126 153h9v9h-9zM333 153h9v9h-9zM405 153h9v9h-9zM72 162h9v9h-9zM288 162h9v9h-9zM486 162h9v9h-9zM567 162h9v9h-9z"/><path fill="#d0d0cc" d="M459 63h9v9h-9zM495 63h9v9h-9zM45 162h9v9h-9z"/><path fill="#d8d8dc" d="M477 63h9v9h-9zM81 81h9v9h-9zM108 162h9v9h-9zM378 162h9v9h-9z"/><path fill="#bcbcc0" d="M513 63h9v9h-9z"/><path fill="#d0ccd0" d="M522 63h9v9h-9zM360 90h9v9h-9zM549 108h9v9h-9zM45 153h9v9h-9zM558 153h9v9h-9z"/><path fill="#ccd0cc" d="M549 63h9v9h-9zM549 81h9v9h-9zM279 135h9v9h-9z"/><path fill="#d4ccd0" d="M558 63h9v9h-9zM495 153h9v9h-9z"/><path fill="#c4c8c8" d="M576 63h9v9h-9zM558 108h9v9h-9z"/><path fill="#c4c4c0" d="M594 63h9v9h-9z"/><path fill="#fffcf4" d="M18 72h9v9h-9z"/><path fill="#f0f4f4" d="M99 72h9v9h-9zM369 108h9v9h-9zM540 126h9v9h-9z"/><path fill="#e4e4d4" d="M18 81h9v9h-9z"/><path fill="#dcd4dc" d="M36 81h9v9h-9z"/><path fill="#dcd8dc" d="M45 81h9v9h-9zM585 90h9v9h-9zM9 144h9v9h-9zM99 162h9v9h-9zM549 162h9v9h-9z"/><path fill="#d4d8d4" d="M63 81h9v9h-9zM45 90h9v9h-9zM468 90h9v9h-9z"/><path fill="#d4d8d8" d="M72 81h9v9h-9zM144 81h9v9h-9zM504 81h9v9h-9zM522 81h9v9h-9zM90 153h9v9h-9zM27 162h9v9h-9zM531 162h9v9h-9z"/><path fill="#d4d4d8" d="M108 81h9v9h-9zM54 90h9v9h-9zM504 90h9v9h-9z"/><path fill="#e0dcdc" d="M117 81h9v9h-9z"/><path fill="#d4d4d0" d="M126 81h9v9h-9zM315 135h9v9h-9z"/><path fill="#e4e8ec" d="M135 81h9v9h-9z"/><path fill="#dce0e4" d="M324 81h9v9h-9zM468 126h9v9h-9z"/><path fill="#dcdcdc" d="M342 81h9v9h-9zM360 81h9v9h-9zM459 81h9v9h-9zM459 90h9v9h-9zM513 126h9v9h-9zM531 126h9v9h-9zM198 135h9v9h-9zM486 135h9v9h-9zM279 162h9v9h-9z"/><path fill="#c8c8d0" d="M468 81h9v9h-9z"/><path fill="#d0d0d4" d="M477 81h9v9h-9zM522 108h9v9h-9zM297 135h9v9h-9zM54 162h9v9h-9zM387 162h9v9h-9zM513 162h9v9h-9z"/><path fill="#dcd8d8" d="M486 81h18v9h-18zM27 90h9v9h-9zM567 90h9v9h-9zM90 162h9v9h-9zM117 162h9v9h-9zM522 162h9v9h-9z"/><path fill="#c8cccc" d="M567 81h9v9h-9zM351 90h9v9h-9zM513 90h9v9h-9zM342 108h9v9h-9zM342 162h9v9h-9z"/><path fill="#d8d4dc" d="M576 81h9v9h-9z"/><path fill="#cccccc" d="M594 81h9v9h-9zM261 135h9v9h-9zM18 153h9v9h-9z"/><path fill="#e4e0d8" d="M18 90h9v9h-9z"/><path fill="#acb0ac" d="M36 90h9v9h-9z"/><path fill="#c8ccd0" d="M63 90h9v9h-9zM27 135h9v9h-9z"/><path fill="#d0ccd4" d="M81 90h9v9h-9z"/><path fill="#c4c0c4" d="M90 90h9v9h-9zM486 108h9v9h-9z"/><path fill="#ccccc8" d="M108 90h9v9h-9zM171 90h9v9h-9z"/><path fill="#d0c8d0" d="M117 90h9v9h-9zM18 162h9v9h-9z"/><path fill="#ccc8c4" d="M126 90h9v9h-9z"/><path fill="#c0c0c4" d="M135 90h9v9h-9z"/><path fill="#d4ccd4" d="M144 90h9v9h-9zM63 153h9v9h-9z"/><path fill="#c4c0c0" d="M153 90h9v9h-9zM513 153h9v9h-9z"/><path fill="#dcdcd8" d="M342 90h9v9h-9zM324 162h9v9h-9z"/><path fill="#d0d4d0" d="M531 90h9v9h-9zM180 135h9v9h-9z"/><path fill="#c4c0c8" d="M549 90h9v9h-9zM279 153h9v9h-9z"/><path fill="#e0dcd4" d="M18 108h9v9h-9z"/><path fill="#c8c0c8" d="M27 108h9v9h-9zM558 135h9v9h-9z"/><path fill="#bcb4c0" d="M36 108h9v9h-9zM54 135h9v9h-9z"/><path fill="#c0bcbc" d="M45 108h9v9h-9zM135 135h9v9h-9z"/><path fill="#c0b8b8" d="M54 108h9v9h-9z"/><path fill="#b4b8c0" d="M72 108h9v9h-9z"/><path fill="#c4c8c4" d="M81 108h9v9h-9zM531 153h9v9h-9z"/><path fill="#c0b8c0" d="M315 108h9v9h-9zM126 135h9v9h-9zM513 135h9v9h-9z"/><path fill="#bcc0c0" d="M324 108h9v9h-9z"/><path fill="#c4bcc8" d="M333 108h9v9h-9z"/><path fill="#c8c8c8" d="M351 108h9v9h-9zM369 162h9v9h-9z"/><path fill="#b8bcc0" d="M360 108h9v9h-9z"/><path fill="#ccd0d0" d="M459 108h9v9h-9zM378 153h9v9h-9zM360 162h9v9h-9z"/><path fill="#acb0b4" d="M468 108h9v9h-9z"/><path fill="#c0c0bc" d="M495 108h9v9h-9zM567 108h9v9h-9z"/><path fill="#b4b0ac" d="M531 108h9v9h-9z"/><path fill="#b4b0b8" d="M576 108h9v9h-9zM333 135h9v9h-9z"/><path fill="#b8b4b4" d="M594 108h9v9h-9z"/><path fill="#fce8a0" d="M0 117h9v9h-9z"/><path fill="#fce498" d="M9 117h9v9h-9z"/><path fill="#f0ece4" d="M18 117h9v9h-9z"/><path fill="#ece8ec" d="M45 117h9v9h-9zM585 126h9v9h-9z"/><path fill="#e8ece8" d="M333 117h9v9h-9z"/><path fill="#ecece8" d="M342 117h9v9h-9z"/><path fill="#f0ecf0" d="M477 117h9v9h-9zM324 126h9v9h-9zM567 171h9v9h-9z"/><path fill="#dcdce0" d="M486 117h9v9h-9zM576 126h9v9h-9zM117 153h9v9h-9zM558 162h9v9h-9zM576 162h9v9h-9z"/><path fill="#ecf0f0" d="M0 126h9v9h-9z"/><path fill="#f4f0f0" d="M72 126h9v9h-9z"/><path fill="#f4f0f4" d="M135 126h9v9h-9z"/><path fill="#e4dce0" d="M261 126h9v9h-9z"/><path fill="#dce0e0" d="M270 126h9v9h-9z"/><path fill="#e8e4e4" d="M288 126h9v9h-9z"/><path fill="#e4e0e8" d="M459 126h9v9h-9z"/><path fill="#e0e0dc" d="M504 126h9v9h-9zM549 126h9v9h-9zM324 153h9v9h-9z"/><path fill="#e4e4e0" d="M594 126h9v9h-9z"/><path fill="#a8c8e4" d="M0 135h9v9h-9z"/><path fill="#a0c0e0" d="M9 135h9v9h-9z"/><path fill="#ccd0d4" d="M18 135h9v9h-9zM63 135h9v9h-9z"/><path fill="#bcc4c4" d="M72 135h9v9h-9z"/><path fill="#b4b0bc" d="M90 135h9v9h-9z"/><path fill="#bcb4b8" d="M99 135h9v9h-9z"/><path fill="#b4bcb8" d="M108 135h9v9h-9z"/><path fill="#b4b8b4" d="M153 135h9v9h-9z"/><path fill="#bcbcbc" d="M171 135h9v9h-9z"/><path fill="#b8bcb4" d="M252 135h9v9h-9z"/><path fill="#c8ccc8" d="M324 135h9v9h-9z"/><path fill="#c0b4c0" d="M342 135h9v9h-9z"/><path fill="#c8c4c4" d="M477 135h9v9h-9z"/><path fill="#ccc8d0" d="M495 135h9v9h-9z"/><path fill="#c4c4cc" d="M549 135h9v9h-9zM594 153h9v9h-9z"/><path fill="#d8d4d4" d="M585 135h18v9h-18zM459 153h9v9h-9zM549 153h9v9h-9zM495 162h9v9h-9z"/><path fill="#e0e0e4" d="M0 144h9v9h-9z"/><path fill="#504038" d="M0 153h9v9h-9zM0 162h9v9h-9z"/><path fill="#3c2820" d="M9 153h9v9h-9zM9 162h9v9h-9z"/><path fill="#c8c8cc" d="M36 153h9v9h-9z"/><path fill="#e0d8dc" d="M81 153h9v9h-9z"/><path fill="#d8d8d4" d="M99 153h9v9h-9z"/><path fill="#d0d4d4" d="M108 153h9v9h-9zM81 162h9v9h-9z"/><path fill="#c0c4c4" d="M288 153h9v9h-9z"/><path fill="#ccc8cc" d="M351 153h9v9h-9zM387 153h9v9h-9zM36 162h9v9h-9z"/><path fill="#dcd4d8" d="M477 153h9v9h-9z"/><path fill="#c0c4cc" d="M486 153h9v9h-9z"/><path fill="#ccd4d0" d="M504 153h9v9h-9z"/><path fill="#dcd8e0" d="M522 153h9v9h-9z"/><path fill="#d8dcdc" d="M297 162h9v9h-9z"/><path fill="#d4d4dc" d="M315 162h9v9h-9z"/><path fill="#bcb8b4" d="M333 162h9v9h-9z"/><path fill="#bcc0c4" d="M396 162h9v9h-9z"/><path fill="#d8d4d8" d="M405 162h9v9h-9z"/><path fill="#d8dcd8" d="M504 162h9v9h-9z"/><path fill="#f0f0ec" d="M585 162h9v9h-9z"/><path fill="#e8e0cc" d="M0 171h9v9h-9z"/><path fill="#e0d8c4" d="M9 171h9v9h-9z"/><path fill="#f8f8f4" d="M18 171h9v9h-9z"/><path fill="#f4f4f8" d="M279 171h18v9h-18zM585 171h9v9h-9z"/><path fill="#f4f8f4" d="M576 171h9v9h-9z"/></svg>
<svg style="left:1001px;top:311px" width="168" height="213" viewBox="0 0 168 213" shape-rendering="crispEdges"><path fill="#f8f8f8" d="M0 0h7v7h-7zM84 0h7v7h-7zM0 14h7v7h-7zM0 21h7v7h-7zM0 35h7v7h-7zM0 42h7v7h-7zM0 49h7v7h-7zM0 63h7v7h-7zM0 70h7v7h-7zM91 70h7v7h-7zM0 84h7v7h-7zM56 84h14v7h-14zM84 84h14v7h-14zM0 91h7v7h-7zM56 91h7v7h-7zM0 105h7v7h-7zM0 112h7v7h-7zM0 126h7v7h-7zM0 133h7v7h-7zM0 147h7v7h-7zM0 154h7v7h-7zM0 161h7v7h-7zM0 175h7v7h-7zM0 182h7v7h-7zM0 196h7v7h-7zM56 196h7v7h-7zM0 203h7v7h-7z"/><path fill="#fcf4dc" d="M14 0h7v7h-7zM14 21h7v7h-7zM14 63h7v7h-7zM14 112h7v7h-7zM14 133h7v7h-7zM14 175h7v7h-7z"/><path fill="#f8e4ac" d="M21 0h14v7h-14zM21 21h14v7h-14zM21 63h14v7h-14zM21 112h14v7h-14zM21 133h14v7h-14zM21 175h14v7h-14z"/><path fill="#fcfcf4" d="M35 0h7v7h-7zM35 42h7v7h-7zM35 63h7v7h-7zM35 112h7v7h-7zM35 133h7v7h-7zM35 175h7v7h-7z"/><path fill="#f4f4f4" d="M42 0h7v7h-7zM0 7h7v7h-7zM0 77h7v7h-7zM49 84h7v7h-7zM91 112h7v7h-7zM105 112h7v7h-7zM0 119h7v7h-7zM56 182h7v7h-7zM0 189h7v7h-7z"/><path fill="#ece8e8" d="M49 0h7v7h-7z"/><path fill="#fcfcfc" d="M56 0h7v7h-7zM105 42h7v7h-7zM63 112h7v7h-7z"/><path fill="#f4f4f0" d="M7 7h7v7h-7zM7 28h7v7h-7z"/><path fill="#f8e8c0" d="M14 7h7v7h-7zM14 28h7v7h-7zM14 56h7v7h-7zM14 77h7v7h-7zM14 98h7v7h-7zM14 119h7v7h-7zM14 140h7v7h-7zM14 168h7v7h-7zM14 189h7v7h-7zM14 210h7v7h-7z"/><path fill="#c4a44c" d="M21 7h14v7h-14zM21 56h14v7h-14zM21 77h14v7h-14zM21 98h14v7h-14zM21 119h14v7h-14zM21 168h14v7h-14zM21 189h14v7h-14zM21 210h14v7h-14z"/><path fill="#fcf8ec" d="M35 7h7v7h-7zM35 14h7v7h-7zM35 28h7v7h-7zM35 35h7v7h-7zM35 49h7v7h-7zM35 98h7v7h-7zM35 119h7v7h-7zM35 126h7v7h-7zM35 147h7v7h-7zM35 161h7v7h-7zM35 182h7v7h-7z"/><path fill="#d4d4d0" d="M42 7h7v7h-7z"/><path fill="#b4b4bc" d="M49 7h7v7h-7z"/><path fill="#c0bcc0" d="M56 7h7v7h-7z"/><path fill="#c8cccc" d="M63 7h7v7h-7zM49 210h7v7h-7z"/><path fill="#b8b8bc" d="M70 7h7v7h-7zM70 56h7v7h-7z"/><path fill="#c4c0c0" d="M77 7h7v7h-7z"/><path fill="#ccd0d0" d="M84 7h7v7h-7z"/><path fill="#f8ecc0" d="M14 14h7v7h-7zM14 35h7v7h-7zM21 42h14v7h-14zM14 49h7v7h-7zM14 70h7v7h-7zM14 105h7v7h-7zM14 126h7v7h-7zM14 147h7v7h-7zM21 154h14v7h-14zM14 161h7v7h-7zM14 182h7v7h-7z"/><path fill="#d8b858" d="M21 14h14v7h-14zM21 49h14v7h-14zM21 126h14v7h-14zM21 161h14v7h-14z"/><path fill="#e0dce0" d="M42 14h7v7h-7zM112 126h7v7h-7zM70 161h7v7h-7z"/><path fill="#dce0e0" d="M49 14h7v7h-7zM49 147h7v7h-7zM77 147h7v7h-7z"/><path fill="#e0e4e4" d="M56 14h7v7h-7zM49 91h7v7h-7zM56 105h7v7h-7zM133 105h7v7h-7zM70 126h7v7h-7z"/><path fill="#d8d8dc" d="M63 14h7v7h-7zM49 203h7v7h-7z"/><path fill="#d8dcdc" d="M70 14h7v7h-7zM49 161h7v7h-7z"/><path fill="#e0e0e0" d="M77 14h14v7h-14zM42 35h7v7h-7zM42 91h7v7h-7zM119 126h7v7h-7z"/><path fill="#fffcf4" d="M35 21h7v7h-7z"/><path fill="#f0f4f0" d="M0 28h7v7h-7z"/><path fill="#c8ac50" d="M21 28h14v7h-14zM21 140h14v7h-14z"/><path fill="#bcb4bc" d="M42 28h7v7h-7zM133 98h7v7h-7z"/><path fill="#d8d8d8" d="M49 28h7v7h-7zM140 105h7v7h-7z"/><path fill="#bcb8c0" d="M56 28h7v7h-7z"/><path fill="#d0d4d4" d="M63 28h7v7h-7zM98 28h7v7h-7z"/><path fill="#d0d0d0" d="M70 28h7v7h-7zM98 147h7v7h-7z"/><path fill="#d8d0d8" d="M77 28h7v7h-7z"/><path fill="#c4c4c8" d="M84 28h7v7h-7z"/><path fill="#d0c8d0" d="M91 28h7v7h-7z"/><path fill="#d8d4d8" d="M105 28h7v7h-7zM63 49h7v7h-7zM98 105h7v7h-7zM42 182h7v7h-7z"/><path fill="#ccd0cc" d="M112 28h7v7h-7z"/><path fill="#d0d0d8" d="M119 28h7v7h-7z"/><path fill="#d4d8d8" d="M126 28h7v7h-7z"/><path fill="#ecece8" d="M133 28h7v7h-7z"/><path fill="#d0b054" d="M21 35h14v7h-14zM21 147h14v7h-14z"/><path fill="#e0d8dc" d="M49 35h7v7h-7z"/><path fill="#c4bcc0" d="M56 35h7v7h-7z"/><path fill="#d4d4d4" d="M63 35h7v7h-7zM56 140h7v7h-7zM84 140h7v7h-7zM63 147h7v7h-7z"/><path fill="#c8ccc8" d="M70 35h7v7h-7zM84 56h7v7h-7zM84 105h7v7h-7zM77 140h7v7h-7z"/><path fill="#c4c0bc" d="M77 35h7v7h-7z"/><path fill="#ccccd0" d="M84 35h7v7h-7zM63 140h7v7h-7z"/><path fill="#b4b8c0" d="M91 35h7v7h-7zM56 56h7v7h-7z"/><path fill="#d0d0d4" d="M98 35h7v7h-7zM49 49h7v7h-7zM77 49h7v7h-7zM42 147h7v7h-7z"/><path fill="#acb0b0" d="M105 35h7v7h-7z"/><path fill="#c8c0c0" d="M112 35h7v7h-7z"/><path fill="#c8c4c8" d="M119 35h7v7h-7z"/><path fill="#c0c4c8" d="M126 35h7v7h-7z"/><path fill="#ececec" d="M133 35h7v7h-7zM70 84h7v7h-7zM112 91h7v7h-7zM140 91h7v7h-7zM77 105h7v7h-7zM42 112h7v7h-7zM42 126h7v7h-7zM56 175h7v7h-7z"/><path fill="#fcf8e8" d="M14 42h7v7h-7zM35 70h7v7h-7zM35 105h7v7h-7zM14 154h7v7h-7zM35 168h7v7h-7zM35 210h7v7h-7z"/><path fill="#bcc0bc" d="M42 49h7v7h-7z"/><path fill="#e4e4e4" d="M56 49h7v7h-7zM77 161h7v7h-7zM49 182h7v7h-7z"/><path fill="#bcc0c4" d="M70 49h7v7h-7zM77 168h7v7h-7z"/><path fill="#d8dcd8" d="M84 49h7v7h-7z"/><path fill="#e4e4e8" d="M91 49h7v7h-7zM105 49h7v7h-7z"/><path fill="#c8c4cc" d="M98 49h7v7h-7z"/><path fill="#f0f0f0" d="M0 56h14v7h-14zM56 70h14v7h-14zM7 77h7v7h-7zM0 98h7v7h-7zM91 105h7v7h-7zM7 140h7v7h-7zM7 168h7v7h-7z"/><path fill="#fff8e8" d="M35 56h7v7h-7z"/><path fill="#d0d4cc" d="M42 56h7v7h-7z"/><path fill="#b4b0b4" d="M49 56h7v7h-7z"/><path fill="#c0c0c0" d="M63 56h7v7h-7z"/><path fill="#b8c0c0" d="M77 56h7v7h-7z"/><path fill="#c8c0cc" d="M91 56h7v7h-7z"/><path fill="#a4a4a8" d="M98 56h7v7h-7z"/><path fill="#d4d0d4" d="M105 56h7v7h-7zM91 77h7v7h-7zM63 126h7v7h-7zM91 140h7v7h-7z"/><path fill="#dcc060" d="M21 70h14v7h-14zM21 105h14v7h-14zM21 182h14v7h-14z"/><path fill="#dcd8d4" d="M42 70h7v7h-7z"/><path fill="#dcdce0" d="M49 70h7v7h-7zM49 126h7v7h-7zM91 126h7v7h-7z"/><path fill="#ecf0f0" d="M70 70h7v7h-7z"/><path fill="#f0ecf0" d="M77 70h7v7h-7zM77 84h7v7h-7zM70 105h7v7h-7zM49 196h7v7h-7z"/><path fill="#e0e0e4" d="M84 70h7v7h-7zM63 105h7v7h-7z"/><path fill="#fffcec" d="M35 77h7v7h-7z"/><path fill="#d0cccc" d="M42 77h7v7h-7z"/><path fill="#acacb0" d="M49 77h7v7h-7zM119 98h7v7h-7z"/><path fill="#bcb8b8" d="M56 77h7v7h-7zM49 98h7v7h-7z"/><path fill="#ccc8d0" d="M63 77h7v7h-7z"/><path fill="#b8b8b4" d="M70 77h7v7h-7z"/><path fill="#acacac" d="M77 77h7v7h-7z"/><path fill="#c0c0bc" d="M84 77h7v7h-7zM91 119h7v7h-7z"/><path fill="#fcf0d4" d="M14 84h7v7h-7zM14 91h7v7h-7zM14 196h7v7h-7zM14 203h7v7h-7z"/><path fill="#ecd894" d="M21 84h14v7h-14zM21 91h14v7h-14zM21 196h14v7h-14zM21 203h14v7h-14z"/><path fill="#fcfcf0" d="M35 84h7v7h-7zM35 203h7v7h-7z"/><path fill="#f0f4f4" d="M42 84h7v7h-7z"/><path fill="#fffcf0" d="M35 91h7v7h-7zM35 196h7v7h-7z"/><path fill="#f4f0f0" d="M7 98h7v7h-7zM7 119h7v7h-7zM0 140h7v7h-7zM7 189h7v7h-7zM7 210h7v7h-7z"/><path fill="#cccccc" d="M42 98h7v7h-7zM98 210h7v7h-7z"/><path fill="#bcb4b8" d="M56 98h7v7h-7z"/><path fill="#c0c0c4" d="M63 98h7v7h-7zM105 98h7v7h-7zM70 147h7v7h-7zM56 210h7v7h-7zM77 210h7v7h-7z"/><path fill="#b4b8b4" d="M70 98h7v7h-7z"/><path fill="#acacb4" d="M77 98h7v7h-7z"/><path fill="#b8b0b4" d="M84 98h7v7h-7z"/><path fill="#a8acb4" d="M91 98h7v7h-7z"/><path fill="#b0b8b0" d="M98 98h7v7h-7z"/><path fill="#98a0a0" d="M112 98h7v7h-7z"/><path fill="#e0e4e0" d="M126 98h7v7h-7z"/><path fill="#a09ca4" d="M140 98h7v7h-7z"/><path fill="#e8e8e8" d="M42 105h14v7h-14zM119 105h7v7h-7z"/><path fill="#e8e8e4" d="M105 105h7v7h-7zM77 126h7v7h-7z"/><path fill="#e8ece8" d="M112 105h7v7h-7z"/><path fill="#dcdcdc" d="M126 105h7v7h-7zM105 126h7v7h-7zM98 140h7v7h-7zM63 161h7v7h-7zM84 161h7v7h-7z"/><path fill="#b4b4b4" d="M42 119h7v7h-7zM70 119h7v7h-7z"/><path fill="#bcbcbc" d="M49 119h7v7h-7z"/><path fill="#c4c0c4" d="M56 119h7v7h-7zM84 147h7v7h-7z"/><path fill="#a0a0a0" d="M63 119h7v7h-7z"/><path fill="#b4b4b8" d="M77 119h7v7h-7z"/><path fill="#acb4b4" d="M84 119h7v7h-7z"/><path fill="#b0a4b0" d="M98 119h7v7h-7z"/><path fill="#c8bcc8" d="M105 119h7v7h-7z"/><path fill="#b0acb4" d="M112 119h7v7h-7z"/><path fill="#c4c8cc" d="M119 119h7v7h-7z"/><path fill="#ece8ec" d="M126 119h7v7h-7z"/><path fill="#e8e4e8" d="M56 126h7v7h-7z"/><path fill="#d8dce0" d="M84 126h7v7h-7z"/><path fill="#aca0ac" d="M98 126h7v7h-7z"/><path fill="#fcfcec" d="M35 140h7v7h-7z"/><path fill="#ccd0d4" d="M42 140h7v7h-7zM49 189h7v7h-7z"/><path fill="#c0b8c4" d="M49 140h7v7h-7z"/><path fill="#ccc4cc" d="M70 140h7v7h-7z"/><path fill="#d4d8d4" d="M56 147h7v7h-7z"/><path fill="#b8b8b8" d="M91 147h7v7h-7z"/><path fill="#fcfcf8" d="M35 154h7v7h-7z"/><path fill="#b8b8c0" d="M42 161h7v7h-7z"/><path fill="#dce0dc" d="M56 161h7v7h-7z"/><path fill="#d0d4d0" d="M91 161h7v7h-7z"/><path fill="#f0ecec" d="M98 161h7v7h-7z"/><path fill="#f0f0f4" d="M0 168h7v7h-7z"/><path fill="#dcdcd8" d="M42 168h7v7h-7z"/><path fill="#c8ccc4" d="M49 168h7v7h-7z"/><path fill="#b0b0b0" d="M56 168h7v7h-7z"/><path fill="#ccc8c8" d="M63 168h7v7h-7z"/><path fill="#c4c4c4" d="M70 168h7v7h-7z"/><path fill="#c4ccc8" d="M84 168h7v7h-7z"/><path fill="#bcc0c0" d="M91 168h7v7h-7z"/><path fill="#c8d0d0" d="M98 168h7v7h-7z"/><path fill="#fcfce8" d="M35 189h7v7h-7z"/><path fill="#ccc4c8" d="M42 189h7v7h-7z"/><path fill="#d4d0d0" d="M56 189h7v7h-7z"/><path fill="#e4e0e4" d="M42 196h7v7h-7z"/><path fill="#e8e8ec" d="M42 203h7v7h-7z"/><path fill="#f4f4f8" d="M0 210h7v7h-7z"/><path fill="#c4c4c0" d="M42 210h7v7h-7z"/><path fill="#989c9c" d="M63 210h7v7h-7z"/><path fill="#b0b4b8" d="M70 210h7v7h-7z"/><path fill="#aca8a8" d="M84 210h7v7h-7z"/><path fill="#c8c8c0" d="M91 210h7v7h-7z"/></svg>
<svg style="left:969px;top:562px" width="854" height="154" viewBox="0 0 854 154" shape-rendering="crispEdges"><path fill="#fffffc" d="M0 0h7v7h-7z"/><path fill="#fff8ec" d="M7 0h7v7h-7zM0 28h7v7h-7zM0 42h7v7h-7zM0 56h7v7h-7zM0 77h7v7h-7zM0 133h7v7h-7z"/><path fill="#fff8e8" d="M14 0h7v7h-7zM0 35h7v7h-7zM0 84h7v7h-7zM0 105h7v7h-7zM0 126h7v7h-7z"/><path fill="#fffcf8" d="M21 0h7v7h-7zM0 140h7v7h-7z"/><path fill="#fcfce8" d="M0 7h7v7h-7z"/><path fill="#f8d864" d="M7 7h14v7h-14zM7 14h14v7h-14zM7 35h14v7h-14zM7 56h14v7h-14zM7 63h14v7h-14zM7 77h14v7h-14zM7 84h14v7h-14zM7 105h14v7h-14zM7 112h14v7h-14zM7 126h14v7h-14zM7 133h14v7h-14zM7 147h14v7h-14z"/><path fill="#fcf4d4" d="M21 7h7v7h-7zM21 14h7v7h-7zM21 35h7v7h-7zM21 56h7v7h-7zM21 63h7v7h-7zM21 77h7v7h-7zM21 84h7v7h-7zM21 105h7v7h-7zM21 112h7v7h-7zM21 126h7v7h-7zM21 133h7v7h-7zM7 140h14v7h-14zM21 147h7v7h-7z"/><path fill="#fcf8e8" d="M0 14h7v7h-7zM21 21h7v7h-7zM0 63h7v7h-7zM21 91h7v7h-7zM0 112h7v7h-7zM0 147h7v7h-7z"/><path fill="#e8e4e4" d="M28 14h7v7h-7zM546 77h7v7h-7zM728 112h7v7h-7zM763 147h7v7h-7z"/><path fill="#fffcf0" d="M0 21h7v7h-7z"/><path fill="#fce8a8" d="M7 21h14v7h-14zM7 91h14v7h-14z"/><path fill="#fcdc7c" d="M7 28h14v7h-14zM7 42h14v7h-14z"/><path fill="#fcf4d8" d="M21 28h7v7h-7zM21 42h7v7h-7z"/><path fill="#d0d0d0" d="M28 28h7v7h-7zM518 56h7v7h-7zM644 63h7v7h-7zM693 77h7v7h-7zM616 84h7v7h-7zM28 133h7v7h-7zM532 133h7v7h-7zM504 147h7v7h-7z"/><path fill="#e4e4e0" d="M35 28h7v7h-7zM35 98h7v7h-7zM35 112h14v7h-14zM504 112h7v7h-7z"/><path fill="#f0ecec" d="M42 28h7v7h-7zM742 112h7v7h-7z"/><path fill="#ececec" d="M49 28h7v7h-7zM63 28h7v7h-7zM539 28h7v7h-7zM672 28h7v7h-7zM672 42h7v7h-7zM686 42h7v7h-7zM833 56h7v7h-7zM714 77h7v7h-7zM770 77h7v7h-7zM518 91h7v7h-7zM49 112h7v7h-7zM70 112h7v7h-7zM623 112h7v7h-7zM651 112h7v7h-7zM749 112h7v7h-7zM56 147h7v7h-7zM84 147h7v7h-7zM749 147h7v7h-7z"/><path fill="#e4e4e4" d="M56 28h7v7h-7zM504 28h7v7h-7zM707 63h7v7h-7zM770 63h7v7h-7zM707 77h7v7h-7zM784 105h7v7h-7zM560 112h7v7h-7zM644 112h7v7h-7zM609 133h7v7h-7zM70 147h7v7h-7zM777 147h7v7h-7z"/><path fill="#e4e4e8" d="M70 28h7v7h-7zM784 56h7v7h-7zM532 112h7v7h-7zM735 112h7v7h-7zM28 119h7v7h-7zM763 133h7v7h-7zM532 147h7v7h-7zM756 147h7v7h-7z"/><path fill="#f0f4f4" d="M77 28h7v7h-7zM777 28h7v7h-7zM777 42h7v7h-7zM840 105h7v7h-7z"/><path fill="#f0f0f0" d="M84 28h14v7h-14zM560 28h7v7h-7zM637 28h14v7h-14zM679 28h7v7h-7zM700 28h7v7h-7zM728 28h7v7h-7zM742 28h7v7h-7zM77 42h7v7h-7zM91 42h7v7h-7zM637 42h7v7h-7zM728 42h7v7h-7zM511 49h7v7h-7zM791 112h7v7h-7zM77 126h7v7h-7zM833 126h7v7h-7zM105 147h7v7h-7zM791 147h7v7h-7z"/><path fill="#d8d4d8" d="M511 28h7v7h-7zM728 56h7v7h-7zM728 126h7v7h-7zM770 126h7v7h-7zM539 133h7v7h-7zM728 133h7v7h-7z"/><path fill="#e0e4e4" d="M518 28h7v7h-7zM665 28h7v7h-7zM35 147h7v7h-7zM742 147h7v7h-7z"/><path fill="#f0f0f4" d="M525 28h14v7h-14zM658 28h7v7h-7zM763 28h7v7h-7zM560 42h7v7h-7z"/><path fill="#f0ecf0" d="M546 28h7v7h-7zM651 28h7v7h-7zM84 42h7v7h-7zM651 42h7v7h-7zM784 84h7v7h-7z"/><path fill="#d0d0d4" d="M553 28h7v7h-7zM616 63h7v7h-7zM700 63h7v7h-7zM679 77h7v7h-7z"/><path fill="#e0e0e0" d="M609 28h7v7h-7zM623 28h7v7h-7zM28 63h7v7h-7zM749 77h7v7h-7zM28 98h7v7h-7zM525 147h7v7h-7z"/><path fill="#d8dcdc" d="M616 28h7v7h-7zM553 147h7v7h-7z"/><path fill="#e0e0e4" d="M630 28h7v7h-7zM560 63h7v7h-7zM609 63h7v7h-7zM658 77h7v7h-7zM616 147h7v7h-7zM700 147h7v7h-7z"/><path fill="#d8d4dc" d="M686 28h7v7h-7zM728 63h7v7h-7z"/><path fill="#f0f4f0" d="M693 28h7v7h-7zM770 147h7v7h-7z"/><path fill="#dcdce0" d="M707 28h7v7h-7zM630 63h7v7h-7zM518 77h7v7h-7zM644 77h7v7h-7z"/><path fill="#f4f4f4" d="M714 28h7v7h-7zM749 28h14v7h-14zM56 42h7v7h-7zM532 42h7v7h-7zM553 42h7v7h-7zM616 42h21v7h-21zM665 42h7v7h-7zM714 42h7v7h-7zM735 42h7v7h-7zM749 42h14v7h-14zM609 49h7v7h-7zM840 56h7v7h-7zM798 63h7v7h-7zM784 77h7v7h-7zM798 84h7v7h-7zM840 84h14v7h-14zM637 91h7v7h-7zM546 98h7v7h-7zM560 98h7v7h-7zM28 112h7v7h-7zM763 112h7v7h-7zM518 119h7v7h-7zM840 126h7v7h-7zM798 133h7v7h-7zM42 147h7v7h-7zM784 147h7v7h-7z"/><path fill="#dce0dc" d="M735 28h7v7h-7zM616 133h7v7h-7zM693 147h7v7h-7z"/><path fill="#f8f8f8" d="M770 28h7v7h-7zM784 28h21v7h-21zM798 35h7v7h-7zM28 42h7v7h-7zM511 42h21v7h-21zM644 42h7v7h-7zM658 42h7v7h-7zM679 42h7v7h-7zM693 42h7v7h-7zM742 42h7v7h-7zM763 42h14v7h-14zM791 42h14v7h-14zM28 49h14v7h-14zM49 49h14v7h-14zM77 49h7v7h-7zM539 49h7v7h-7zM616 49h7v7h-7zM679 49h7v7h-7zM735 49h7v7h-7zM847 56h7v7h-7zM567 77h7v7h-7zM798 77h7v7h-7zM42 98h7v7h-7zM56 98h7v7h-7zM553 98h7v7h-7zM847 105h7v7h-7zM504 119h14v7h-14zM525 119h7v7h-7zM539 119h7v7h-7zM553 119h7v7h-7zM609 119h14v7h-14zM637 119h7v7h-7zM693 119h7v7h-7zM735 119h7v7h-7zM798 126h7v7h-7zM847 126h7v7h-7z"/><path fill="#bcb4c0" d="M28 35h7v7h-7z"/><path fill="#c0c0bc" d="M35 35h7v7h-7zM658 84h7v7h-7z"/><path fill="#acb0a8" d="M42 35h7v7h-7z"/><path fill="#9c9ca0" d="M49 35h7v7h-7z"/><path fill="#d0ccd0" d="M56 35h7v7h-7zM686 63h7v7h-7zM609 77h7v7h-7zM532 126h7v7h-7zM553 133h7v7h-7z"/><path fill="#a49c9c" d="M63 35h7v7h-7z"/><path fill="#a4a0a8" d="M70 35h7v7h-7z"/><path fill="#ccccd4" d="M77 35h7v7h-7zM525 84h7v7h-7z"/><path fill="#d8d8dc" d="M84 35h7v7h-7zM70 63h7v7h-7zM546 63h7v7h-7zM553 77h7v7h-7zM546 147h7v7h-7zM644 147h7v7h-7z"/><path fill="#c0c0c8" d="M91 35h7v7h-7zM511 77h7v7h-7zM651 84h7v7h-7z"/><path fill="#b8bcb4" d="M504 35h7v7h-7z"/><path fill="#a8b4b4" d="M511 35h7v7h-7z"/><path fill="#bcbcb4" d="M518 35h7v7h-7z"/><path fill="#b8b8b4" d="M525 35h7v7h-7z"/><path fill="#aca8ac" d="M532 35h7v7h-7zM707 84h7v7h-7zM658 105h7v7h-7z"/><path fill="#b8b4c0" d="M539 35h7v7h-7z"/><path fill="#b4b4b4" d="M546 35h7v7h-7zM630 105h7v7h-7z"/><path fill="#a0a4a8" d="M553 35h7v7h-7z"/><path fill="#c8c4c8" d="M560 35h7v7h-7zM728 35h7v7h-7z"/><path fill="#c8cccc" d="M609 35h7v7h-7zM532 63h7v7h-7zM546 112h7v7h-7zM63 126h7v7h-7z"/><path fill="#cccccc" d="M616 35h7v7h-7zM56 63h7v7h-7zM770 84h7v7h-7z"/><path fill="#a8b0ac" d="M623 35h7v7h-7z"/><path fill="#acacb0" d="M630 35h7v7h-7z"/><path fill="#ccd0cc" d="M637 35h7v7h-7zM749 126h7v7h-7z"/><path fill="#c0c8c4" d="M644 35h7v7h-7zM672 35h7v7h-7z"/><path fill="#b0a4a8" d="M651 35h7v7h-7z"/><path fill="#b8c0b8" d="M658 35h7v7h-7z"/><path fill="#a4a0a4" d="M665 35h7v7h-7z"/><path fill="#bcb8bc" d="M679 35h7v7h-7zM686 56h7v7h-7zM623 105h7v7h-7zM56 126h7v7h-7z"/><path fill="#b8b4b8" d="M686 35h7v7h-7zM749 35h7v7h-7zM504 77h7v7h-7z"/><path fill="#b4a8b8" d="M693 35h7v7h-7z"/><path fill="#c8ccc8" d="M700 35h7v7h-7zM539 42h7v7h-7z"/><path fill="#9494a0" d="M707 35h7v7h-7z"/><path fill="#d0ccd4" d="M714 35h7v7h-7zM609 56h7v7h-7zM756 63h7v7h-7zM609 84h7v7h-7z"/><path fill="#9ca4a0" d="M735 35h7v7h-7z"/><path fill="#b0b0b4" d="M742 35h7v7h-7z"/><path fill="#acb0ac" d="M756 35h7v7h-7zM735 56h7v7h-7z"/><path fill="#c4c4c8" d="M763 35h7v7h-7zM63 42h7v7h-7zM546 56h7v7h-7zM742 56h7v7h-7zM756 56h7v7h-7zM700 84h7v7h-7z"/><path fill="#c4c8c8" d="M770 35h7v7h-7zM616 126h7v7h-7z"/><path fill="#a4aca8" d="M777 35h7v7h-7z"/><path fill="#e8e8e8" d="M784 35h7v7h-7zM714 63h7v7h-7zM35 77h7v7h-7zM714 84h7v7h-7zM63 112h7v7h-7zM77 112h7v7h-7zM658 112h14v7h-14zM784 126h7v7h-7zM42 133h7v7h-7zM518 133h7v7h-7zM672 147h7v7h-7zM707 147h7v7h-7zM728 147h7v7h-7z"/><path fill="#b0b0b8" d="M791 35h7v7h-7z"/><path fill="#ecece8" d="M833 35h7v7h-7z"/><path fill="#f4f0f4" d="M840 35h7v7h-7zM770 112h7v7h-7z"/><path fill="#f8f4f8" d="M847 35h7v7h-7zM35 42h7v7h-7zM70 42h7v7h-7z"/><path fill="#ece8e8" d="M42 42h7v7h-7zM35 84h7v7h-7z"/><path fill="#c4c4c4" d="M49 42h7v7h-7zM693 56h7v7h-7zM777 56h7v7h-7zM546 84h7v7h-7zM770 105h7v7h-7zM742 126h7v7h-7zM623 147h7v7h-7z"/><path fill="#f4f4f8" d="M504 42h7v7h-7zM798 105h7v7h-7z"/><path fill="#ececf0" d="M546 42h7v7h-7z"/><path fill="#f8f4f4" d="M609 42h7v7h-7zM798 112h7v7h-7z"/><path fill="#d8d8d8" d="M700 42h7v7h-7zM770 56h7v7h-7zM658 63h7v7h-7zM742 77h7v7h-7zM777 77h7v7h-7zM609 147h7v7h-7z"/><path fill="#e4e0e4" d="M707 42h7v7h-7zM770 133h7v7h-7zM98 147h7v7h-7zM560 147h7v7h-7zM651 147h7v7h-7z"/><path fill="#fffcf4" d="M0 49h7v7h-7zM0 70h7v7h-7zM0 119h7v7h-7zM21 140h7v7h-7z"/><path fill="#fcecbc" d="M7 49h14v7h-14zM7 70h14v7h-14zM7 119h14v7h-14z"/><path fill="#fffcec" d="M21 49h7v7h-7zM21 70h7v7h-7zM21 119h7v7h-7z"/><path fill="#e8e8e4" d="M504 49h7v7h-7zM672 77h7v7h-7z"/><path fill="#fcfcfc" d="M686 49h7v7h-7zM784 63h7v7h-7zM833 63h7v7h-7zM35 119h7v7h-7zM77 133h7v7h-7zM784 133h7v7h-7zM833 133h7v7h-7z"/><path fill="#a8a4a0" d="M28 56h7v7h-7z"/><path fill="#e8e4e8" d="M35 56h7v7h-7zM511 63h7v7h-7zM672 63h7v7h-7zM756 112h7v7h-7zM518 147h7v7h-7zM630 147h7v7h-7z"/><path fill="#ccc4c8" d="M42 56h7v7h-7zM539 77h7v7h-7z"/><path fill="#aca8a8" d="M49 56h7v7h-7z"/><path fill="#b0b4bc" d="M56 56h7v7h-7z"/><path fill="#bcc0bc" d="M63 56h7v7h-7z"/><path fill="#bcbcb8" d="M70 56h7v7h-7zM28 105h7v7h-7z"/><path fill="#c0c0c0" d="M77 56h7v7h-7zM791 84h7v7h-7z"/><path fill="#ccd0d0" d="M504 56h7v7h-7zM763 126h7v7h-7z"/><path fill="#d0cccc" d="M511 56h7v7h-7zM763 56h7v7h-7zM35 133h7v7h-7zM63 147h7v7h-7z"/><path fill="#c0bcc0" d="M525 56h7v7h-7zM630 56h7v7h-7z"/><path fill="#c8c4cc" d="M532 56h7v7h-7zM623 133h7v7h-7z"/><path fill="#b4bcbc" d="M539 56h7v7h-7z"/><path fill="#b8b8bc" d="M553 56h7v7h-7zM28 126h7v7h-7zM518 126h7v7h-7zM672 126h7v7h-7z"/><path fill="#c8c4c4" d="M560 56h7v7h-7zM504 84h7v7h-7z"/><path fill="#ccc4cc" d="M616 56h7v7h-7z"/><path fill="#b4b8bc" d="M623 56h7v7h-7zM637 105h7v7h-7z"/><path fill="#b8bcbc" d="M637 56h7v7h-7z"/><path fill="#acacac" d="M644 56h7v7h-7z"/><path fill="#c0b8bc" d="M651 56h7v7h-7z"/><path fill="#ccccd0" d="M658 56h7v7h-7zM49 63h7v7h-7zM777 63h7v7h-7zM616 77h7v7h-7zM609 126h7v7h-7z"/><path fill="#b4acbc" d="M665 56h7v7h-7z"/><path fill="#d4d4d0" d="M672 56h7v7h-7zM63 133h7v7h-7zM693 133h7v7h-7z"/><path fill="#b8bcc0" d="M679 56h7v7h-7z"/><path fill="#b0bcb8" d="M700 56h7v7h-7z"/><path fill="#c8c8cc" d="M707 56h7v7h-7zM28 77h7v7h-7zM546 133h7v7h-7z"/><path fill="#dcdcdc" d="M714 56h7v7h-7zM623 77h7v7h-7z"/><path fill="#ccc8d0" d="M749 56h7v7h-7zM777 133h7v7h-7zM77 147h7v7h-7z"/><path fill="#c8c8c8" d="M791 56h7v7h-7zM686 77h7v7h-7zM525 112h7v7h-7zM658 126h14v7h-14zM700 126h7v7h-7z"/><path fill="#f4f8f8" d="M798 56h7v7h-7zM798 147h7v7h-7z"/><path fill="#c8c8d0" d="M35 63h7v7h-7zM616 105h7v7h-7z"/><path fill="#d4d4d8" d="M42 63h7v7h-7zM791 63h7v7h-7zM637 77h7v7h-7zM700 77h7v7h-7zM623 126h7v7h-7zM511 133h7v7h-7zM658 133h7v7h-7zM91 147h7v7h-7z"/><path fill="#d0d4d4" d="M63 63h7v7h-7zM532 77h7v7h-7zM511 147h7v7h-7zM637 147h7v7h-7z"/><path fill="#d4d0d8" d="M77 63h7v7h-7zM644 126h7v7h-7z"/><path fill="#e4e8e8" d="M504 63h7v7h-7zM763 63h7v7h-7zM553 112h7v7h-7zM616 112h7v7h-7zM777 112h7v7h-7z"/><path fill="#d0c8d0" d="M518 63h7v7h-7zM560 84h7v7h-7z"/><path fill="#d8d8d4" d="M525 63h7v7h-7z"/><path fill="#c4c8c4" d="M539 63h7v7h-7zM63 105h7v7h-7z"/><path fill="#e0dce0" d="M553 63h7v7h-7zM763 77h7v7h-7z"/><path fill="#dce0e0" d="M623 63h7v7h-7zM665 133h7v7h-7z"/><path fill="#d0d4d0" d="M637 63h7v7h-7zM511 84h7v7h-7zM630 126h7v7h-7z"/><path fill="#d4dcdc" d="M651 63h7v7h-7z"/><path fill="#b0acac" d="M665 63h7v7h-7zM546 105h7v7h-7z"/><path fill="#ccc8cc" d="M679 63h7v7h-7zM630 77h7v7h-7zM651 133h7v7h-7zM735 133h7v7h-7z"/><path fill="#d4d0cc" d="M693 63h7v7h-7z"/><path fill="#d0ccc8" d="M735 63h7v7h-7z"/><path fill="#dcd8d8" d="M742 63h7v7h-7zM651 77h7v7h-7zM665 77h7v7h-7zM756 77h7v7h-7zM630 84h7v7h-7zM560 126h7v7h-7z"/><path fill="#d4d8d8" d="M749 63h7v7h-7zM749 133h7v7h-7z"/><path fill="#c4c0c4" d="M525 77h7v7h-7zM532 84h7v7h-7zM504 105h7v7h-7zM504 126h7v7h-7z"/><path fill="#d4d4d4" d="M560 77h7v7h-7zM763 84h7v7h-7zM539 112h7v7h-7zM504 133h7v7h-7z"/><path fill="#e4e0e0" d="M728 77h7v7h-7zM791 77h7v7h-7zM665 147h7v7h-7z"/><path fill="#bcbcbc" d="M735 77h7v7h-7z"/><path fill="#ccccc8" d="M28 84h7v7h-7zM49 126h7v7h-7zM686 126h7v7h-7zM637 133h7v7h-7z"/><path fill="#b8b4b0" d="M518 84h7v7h-7z"/><path fill="#a09ca4" d="M539 84h7v7h-7z"/><path fill="#b4b0b8" d="M553 84h7v7h-7z"/><path fill="#e8e8ec" d="M567 84h7v7h-7zM833 84h7v7h-7zM511 98h7v7h-7zM616 98h7v7h-7zM833 105h7v7h-7zM567 126h7v7h-7z"/><path fill="#a8a4ac" d="M623 84h7v7h-7z"/><path fill="#aca4a8" d="M637 84h7v7h-7z"/><path fill="#bcbcc0" d="M644 84h7v7h-7zM749 105h7v7h-7z"/><path fill="#c8c0c8" d="M665 84h7v7h-7z"/><path fill="#bcc0c4" d="M672 84h7v7h-7z"/><path fill="#c4c8cc" d="M679 84h7v7h-7zM651 105h7v7h-7zM42 126h7v7h-7z"/><path fill="#bcb0b4" d="M686 84h7v7h-7z"/><path fill="#b4b4b8" d="M693 84h7v7h-7z"/><path fill="#d0c8cc" d="M728 84h7v7h-7zM735 147h7v7h-7z"/><path fill="#acb0b4" d="M735 84h7v7h-7z"/><path fill="#c0c8cc" d="M742 84h7v7h-7z"/><path fill="#c0c0c4" d="M749 84h7v7h-7z"/><path fill="#bcbcc4" d="M756 84h7v7h-7zM525 133h7v7h-7z"/><path fill="#bcb4b8" d="M777 84h7v7h-7z"/><path fill="#fcfcf4" d="M0 91h7v7h-7z"/><path fill="#fcfcf0" d="M0 98h7v7h-7z"/><path fill="#fce490" d="M7 98h14v7h-14z"/><path fill="#fcf8e0" d="M21 98h7v7h-7z"/><path fill="#dcd8dc" d="M504 98h7v7h-7zM511 112h14v7h-14zM742 133h7v7h-7z"/><path fill="#ece8ec" d="M609 98h7v7h-7zM56 112h7v7h-7zM658 147h7v7h-7z"/><path fill="#fcf8f8" d="M630 98h7v7h-7z"/><path fill="#ecf0ec" d="M735 98h7v7h-7z"/><path fill="#b0b0b0" d="M35 105h7v7h-7z"/><path fill="#a8b0b0" d="M42 105h7v7h-7z"/><path fill="#acb4b0" d="M49 105h7v7h-7z"/><path fill="#acb0a4" d="M56 105h7v7h-7z"/><path fill="#a4a0a0" d="M70 105h7v7h-7z"/><path fill="#c8c0c4" d="M77 105h7v7h-7z"/><path fill="#acb4ac" d="M511 105h7v7h-7z"/><path fill="#b4acb8" d="M518 105h14v7h-14zM35 126h7v7h-7z"/><path fill="#989ca8" d="M532 105h7v7h-7z"/><path fill="#b4b4b0" d="M539 105h7v7h-7z"/><path fill="#c0bcc4" d="M553 105h7v7h-7zM539 126h7v7h-7z"/><path fill="#b0a8a8" d="M560 105h7v7h-7z"/><path fill="#b0b0ac" d="M609 105h7v7h-7z"/><path fill="#a0a0a8" d="M644 105h7v7h-7z"/><path fill="#ccc4c4" d="M665 105h7v7h-7z"/><path fill="#c4c0c8" d="M728 105h7v7h-7zM553 126h7v7h-7z"/><path fill="#9c9c9c" d="M735 105h7v7h-7z"/><path fill="#b8b0b4" d="M742 105h7v7h-7z"/><path fill="#acb4b4" d="M756 105h7v7h-7z"/><path fill="#c4c0c0" d="M763 105h7v7h-7zM777 126h7v7h-7z"/><path fill="#a0acac" d="M777 105h7v7h-7z"/><path fill="#b4b0b0" d="M791 105h7v7h-7z"/><path fill="#f4f0f0" d="M609 112h7v7h-7z"/><path fill="#e0e4e0" d="M630 112h14v7h-14z"/><path fill="#bcb0b8" d="M70 126h7v7h-7z"/><path fill="#b0acb0" d="M511 126h7v7h-7z"/><path fill="#aca0a4" d="M525 126h7v7h-7z"/><path fill="#c4c4c0" d="M546 126h7v7h-7z"/><path fill="#bcc0c0" d="M637 126h7v7h-7z"/><path fill="#c0bcc8" d="M651 126h7v7h-7z"/><path fill="#b4b0b4" d="M679 126h7v7h-7z"/><path fill="#c0bcbc" d="M693 126h7v7h-7z"/><path fill="#b4b8b4" d="M707 126h7v7h-7z"/><path fill="#a8a8ac" d="M735 126h7v7h-7z"/><path fill="#c4c0cc" d="M756 126h7v7h-7z"/><path fill="#d0d0cc" d="M791 126h7v7h-7z"/><path fill="#c4cccc" d="M49 133h7v7h-7z"/><path fill="#ccd0d4" d="M56 133h7v7h-7z"/><path fill="#d8d4d4" d="M70 133h7v7h-7zM630 133h7v7h-7z"/><path fill="#c4bcc4" d="M560 133h7v7h-7z"/><path fill="#ccd4d0" d="M644 133h7v7h-7z"/><path fill="#bcc4c0" d="M672 133h7v7h-7z"/><path fill="#ccd4d4" d="M679 133h7v7h-7z"/><path fill="#d8dcd8" d="M686 133h7v7h-7z"/><path fill="#d4d0d4" d="M700 133h7v7h-7z"/><path fill="#e0dcdc" d="M707 133h7v7h-7z"/><path fill="#d4ccd4" d="M756 133h7v7h-7z"/><path fill="#d4d8dc" d="M791 133h7v7h-7z"/><path fill="#c0c4c8" d="M28 147h7v7h-7z"/><path fill="#c8c8c4" d="M49 147h7v7h-7z"/><path fill="#e8ecec" d="M539 147h7v7h-7z"/><path fill="#c0b8c4" d="M679 147h7v7h-7z"/><path fill="#e8ece8" d="M686 147h7v7h-7z"/></svg>
</body></html>
